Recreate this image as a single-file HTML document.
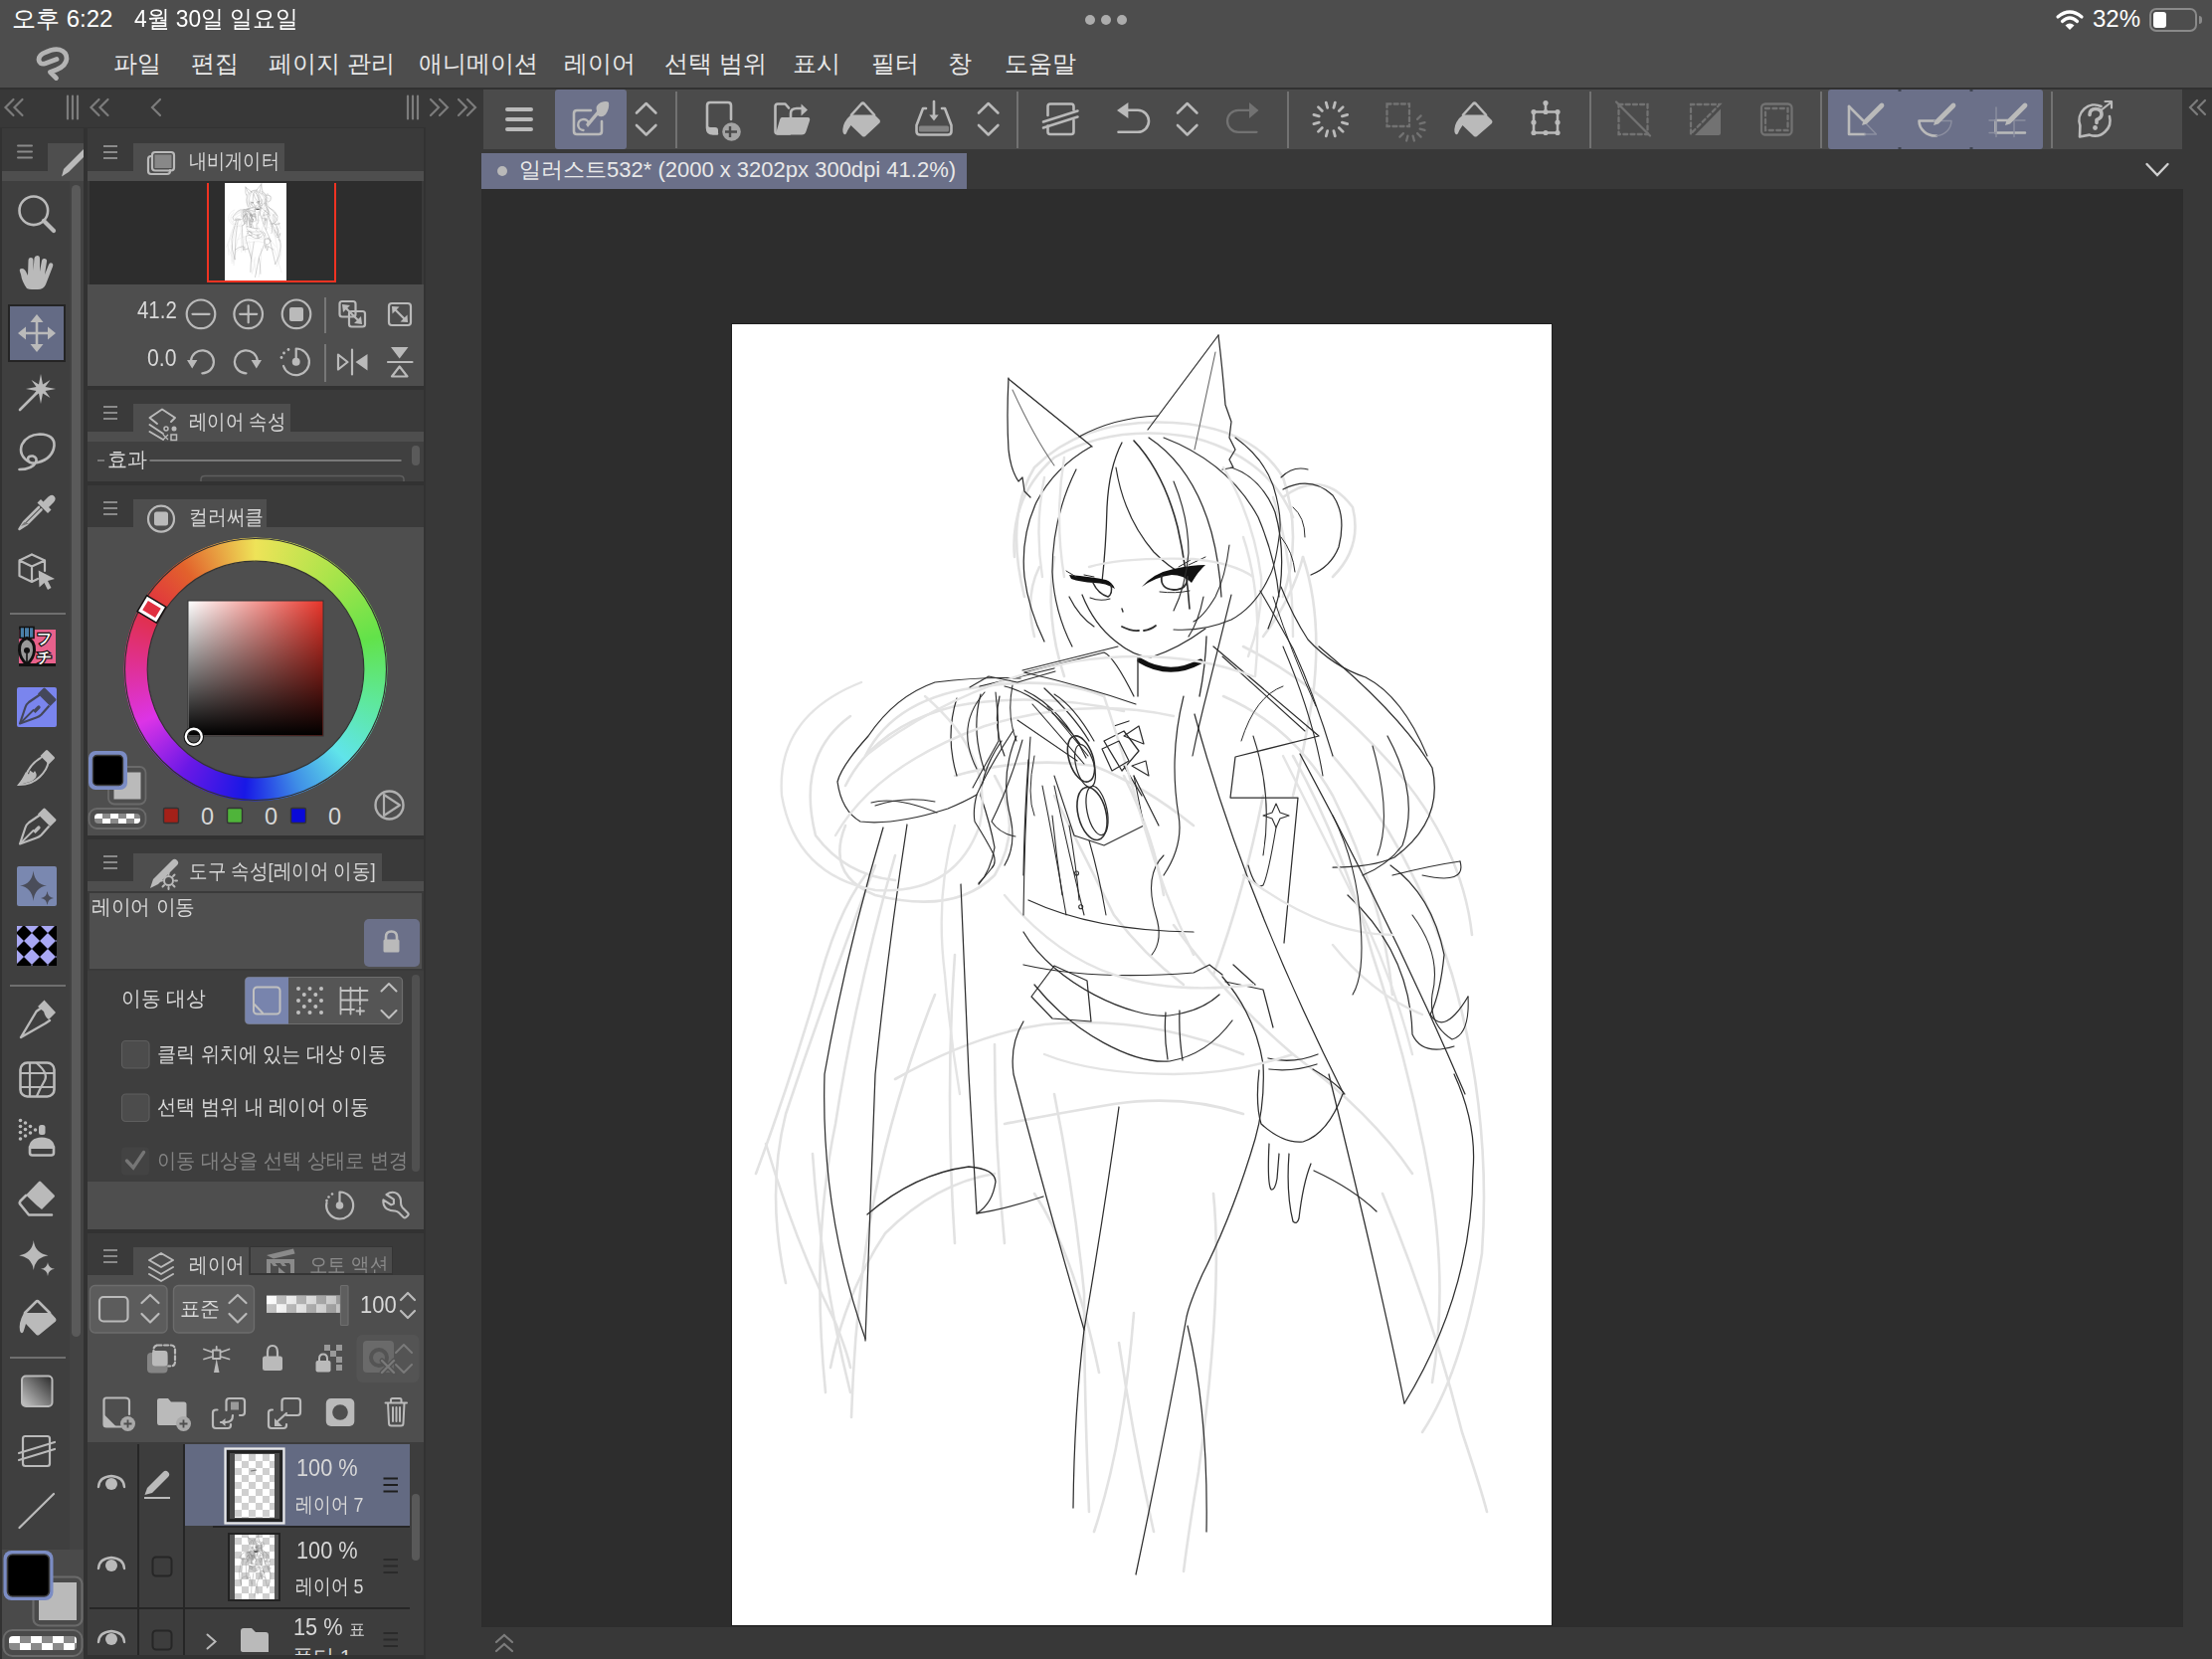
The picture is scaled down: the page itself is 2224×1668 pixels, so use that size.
<!DOCTYPE html>
<html><head><meta charset="utf-8">
<style>
*{margin:0;padding:0;box-sizing:border-box}
html,body{width:2224px;height:1668px;overflow:hidden;background:#383838;font-family:"Liberation Sans",sans-serif;color:#e0e0e0}
.a{position:absolute}
svg{position:absolute;overflow:visible}
.t{position:absolute;white-space:nowrap;line-height:1}
.ic{fill:none;stroke:#b9b9b9;stroke-width:2.6;stroke-linecap:round;stroke-linejoin:round}
.fi{fill:#b9b9b9;stroke:none}
.mn{font-size:24px;color:#e8e8e8;top:52px}
</style></head><body>
<!-- ===== top bar ===== -->
<div class="a" style="left:0;top:0;width:2224px;height:88px;background:#4d4d4d"></div>
<div class="a" style="left:0;top:88px;width:2224px;height:2px;background:#313131"></div>
<div class="t" style="left:12px;top:7px;font-size:24px;color:#fff">오후 6:22</div>
<div class="t" style="left:135px;top:7px;font-size:24px;transform:scaleX(0.95);transform-origin:0 0;color:#fff">4월 30일 일요일</div>
<!-- three dots -->
<div class="a" style="left:1091px;top:15px;width:10px;height:10px;border-radius:50%;background:#acacac"></div>
<div class="a" style="left:1107px;top:15px;width:10px;height:10px;border-radius:50%;background:#acacac"></div>
<div class="a" style="left:1123px;top:15px;width:10px;height:10px;border-radius:50%;background:#acacac"></div>
<!-- wifi / battery -->
<svg style="left:2067px;top:9px" width="28" height="22" viewBox="0 0 28 22">
<path d="M2 8 Q14 -2 26 8" fill="none" stroke="#fff" stroke-width="3.2" stroke-linecap="round"/>
<path d="M6.5 12.5 Q14 5.5 21.5 12.5" fill="none" stroke="#fff" stroke-width="3.2" stroke-linecap="round"/>
<path d="M14 21 L9.5 16.5 Q14 12.5 18.5 16.5 Z" fill="#fff"/>
</svg>
<div class="t" style="left:2104px;top:7px;font-size:24px;color:#fff">32%</div>
<div class="a" style="left:2161px;top:8px;width:48px;height:24px;border:2px solid #8a8a8a;border-radius:7px"></div>
<div class="a" style="left:2165px;top:12px;width:13px;height:16px;background:#fff;border-radius:3px"></div>
<div class="a" style="left:2211px;top:16px;width:3px;height:8px;background:#8a8a8a;border-radius:0 3px 3px 0"></div>
<!-- CSP logo -->
<svg style="left:36px;top:47px" width="36" height="34" viewBox="0 0 36 34">
<path d="M21 12.5 L9 17 Q3.5 18 3 13 Q3 8 10 5.5 L15 3.5 Q20 2 24 3 Q31 5 31 12 Q30.5 19 21 23 L14.5 25.5 L20.5 31.5" fill="none" stroke="#b4b4b4" stroke-width="4.8" stroke-linecap="round" stroke-linejoin="round"/>
</svg>
<!-- menu -->
<div class="t mn" style="left:114px">파일</div>
<div class="t mn" style="left:192px">편집</div>
<div class="t mn" style="left:270px">페이지 관리</div>
<div class="t mn" style="left:421px">애니메이션</div>
<div class="t mn" style="left:567px">레이어</div>
<div class="t mn" style="left:668px">선택 범위</div>
<div class="t mn" style="left:797px">표시</div>
<div class="t mn" style="left:876px">필터</div>
<div class="t mn" style="left:953px">창</div>
<div class="t mn" style="left:1010px">도움말</div>

<!-- ===== header row (left) ===== -->
<div class="a" style="left:0;top:90px;width:486px;height:38px;background:#383838"></div>
<svg style="left:0;top:90px" width="486" height="38" viewBox="0 0 486 38">
<g fill="none" stroke="#7c7c7c" stroke-width="2.2" stroke-linecap="round">
<path d="M13.5 10 L5.5 18 L13.5 26 M22.5 10 L14.5 18 L22.5 26"/>
<path d="M68 6.5 V29.5 M73 6.5 V29.5 M78 6.5 V29.5"/>
<path d="M99.5 10 L91.5 18 L99.5 26 M108.5 10 L100.5 18 L108.5 26"/>
<path d="M161 10 L153 18 L161 26"/>
<path d="M410 6.5 V29.5 M415 6.5 V29.5 M420 6.5 V29.5"/>
<path d="M433 10 L441 18 L433 26 M442 10 L450 18 L442 26"/>
<path d="M461 10 L469 18 L461 26 M470 10 L478 18 L470 26"/>
</g></svg>

<!-- ===== toolbar ===== -->
<div class="a" style="left:486px;top:90px;width:1708px;height:60px;background:#4b4b4b"></div>
<div class="a" style="left:558px;top:90px;width:72px;height:60px;background:#6b7089;border-radius:3px"></div>
<div class="a" style="left:1838px;top:90px;width:216px;height:60px;background:#6b7089;border-radius:3px"></div>
<div class="a" style="left:679px;top:92px;width:2px;height:57px;background:#727272"></div>
<div class="a" style="left:1022px;top:92px;width:2px;height:57px;background:#727272"></div>
<div class="a" style="left:1294px;top:92px;width:2px;height:57px;background:#727272"></div>
<div class="a" style="left:1598px;top:92px;width:2px;height:57px;background:#727272"></div>
<div class="a" style="left:1830px;top:92px;width:2px;height:57px;background:#727272"></div>
<div class="a" style="left:2062px;top:92px;width:2px;height:57px;background:#727272"></div>
<!-- right column chevrons -->
<svg style="left:2194px;top:90px" width="30" height="38" viewBox="0 0 30 38">
<path d="M15 11 L8 18 L15 25 M23 11 L16 18 L23 25" fill="none" stroke="#7c7c7c" stroke-width="2.2" stroke-linecap="round"/>
</svg>
<!-- toolbar icons -->
<svg style="left:0;top:0" width="2224" height="160" viewBox="0 0 2224 160">
<g fill="none" stroke="#bababa" stroke-width="2.6" stroke-linecap="round" stroke-linejoin="round">
<!-- hamburger -->
<path d="M510 110 H534 M510 120 H534 M510 130 H534" stroke-width="4"/>
<!-- active tool -->
<path d="M594 111 H580 Q577 111 577 114 V132 Q577 135 580 135 H602 Q605 135 605 132 V122"/>
<path d="M586.5 131 A5.5 5.5 0 1 1 592 124" stroke-width="2.4"/>
<!-- updown -->
<path d="M640 113.5 L649.7 104 L659.4 113.5 M640 126 L649.7 135.5 L659.4 126"/>
<path d="M984 113.5 L993.7 104 L1003.4 113.5 M984 126 L993.7 135.5 L1003.4 126"/>
<path d="M1184 113.5 L1193.7 104 L1203.4 113.5 M1184 126 L1193.7 135.5 L1203.4 126"/>
<!-- new doc -->
<path d="M721 134.5 H717 Q711 134.5 711 128.5 V106 Q711 103 714 103 H732 Q735 103 735 106 V120"/>
<!-- open folder -->
<path d="M794 134.5 H782 Q779.5 134.5 779.5 132 V107 Q779.5 104.5 782 104.5 H789.5 L793 108.5"/>
<path d="M795 118 V114 Q795 109 801 109 H807"/>
<!-- bucket outline top -->
<path d="M856 115.5 L866 104.5 Q867.5 103 869 104.5 L879 115.5"/>
<!-- save tray -->
<path d="M931 109 H928 L921.5 126 V132 Q921.5 135.5 925 135.5 H953 Q956.5 135.5 956.5 132 V126 L950 109 H947"/>
<path d="M939 102 V118"/>
<!-- clear layer -->
<path d="M1053.5 116 V107 Q1053.5 104.5 1056 104.5 H1077 Q1079.5 104.5 1079.5 107 V110.5 M1079.5 121 V132.5 Q1079.5 135 1077 135 H1056 Q1053.5 135 1053.5 132.5 V126.5"/>
<path d="M1049 122.5 L1083.5 111.5 M1049 128.5 L1083.5 117.5"/>
<!-- undo -->
<path d="M1132 110.8 H1144 A11 11 0 0 1 1144 132.8 H1124.5"/>
<!-- transform box -->
<path d="M1471 115.5 L1481 104.5 Q1482.5 103 1484 104.5 L1494 115.5"/>
<path d="M1542 112.5 H1566 V133.5 H1542 Z M1554 112.5 V103.5"/>
<!-- ruler icons -->
<path d="M1859 107 V135 H1875" />
<path d="M1875 135 H1886.5 L1875 123" stroke="#8c8fa0" stroke-width="1.4"/>
<path d="M1859 107 L1873 121"/>
<path d="M1929.5 121.5 H1945 M1929.5 121.5 A16.5 15 0 0 0 1947 136.5" />
<path d="M1945 121.5 H1962 A16.5 15 0 0 1 1947 136.5" stroke="#8c8fa0" stroke-width="1.4"/>
<path d="M2006.5 121 V133.5 H2036 M2006.5 121 H2019" />
<path d="M2007 108 V137.5 M2025 121 V137.5 M2000 121 H2006 M2019 121 H2036 M2000 133.5 H2006" stroke="#8c8fa0" stroke-width="1.4"/>
<!-- help -->
<path d="M2100.7 135.6 L2091 137.5 L2091.4 126.3 A15.5 15.5 0 0 1 2112.55 106.95 M2120.97 117 A15.5 15.5 0 0 1 2100.7 135.6"/>
<path d="M2113.5 110 L2123 102.5 M2116.5 102 H2123 V108.5" stroke-width="2.2"/>
<path d="M2101 115.5 Q2101 109.5 2107 109.5 Q2113 109.5 2113 115 Q2113 118.5 2108 120.5 V123.5" stroke-width="3.6"/>
</g>
<g fill="#bababa">
<!-- active tool leaf -->
<path d="M589 125 L600 112 Q598 106 604 103 Q610 101 612 103 Q613 109 609 115 Q605 119 601 116 L591 128 Z"/>
<!-- new doc corner + plus circle -->
<path d="M711 124 Q711 128 714.5 128 H719 Q722 128 722 131 V135 H717 Q711 135 711 128.5 Z"/>
<circle cx="735.5" cy="132.5" r="9.3" fill="#a4a4a4"/>
<!-- folder front -->
<path d="M786 118 H812 Q815 118 814 121.5 L810.5 132 Q809.5 135.5 806 135.5 H782 Q779.5 135.5 780.5 132.5 L784 120.5 Q784.5 118 786 118 Z"/>
<path d="M805.5 104.5 L812 110.5 L805.5 116.5 Z"/>
<!-- bucket fill -->
<path d="M855.5 115.5 H879.5 L884.5 120.5 Q885.5 122 884.5 123.5 L870 137 Q868.5 138 867 137 L855.5 126 Q852 131 851 134 Q849 137 847.5 133 Q846.5 126 852 119 Z"/>
<!-- save tray bar -->
<rect x="924" y="126.5" width="30" height="6" rx="1.5" fill="#838383"/>
<path d="M934.3 115.5 H943.7 L939 121.5 Z"/>
<!-- undo arrowhead -->
<path d="M1134.4 102.9 V119 L1123 111 Z"/>
<!-- bucket 2 -->
<path d="M1471 115.5 H1494.5 L1500 121 Q1501 122.5 1500 124 L1485 137 Q1483.5 138 1482 137 L1470.5 126 Q1467 131 1466 134 Q1464 137 1462.5 133 Q1461.5 126 1467 119 Z"/>
<!-- transform handles -->
<circle cx="1542" cy="112.5" r="2.6"/><circle cx="1554" cy="112.5" r="2.6"/><circle cx="1566" cy="112.5" r="2.6"/>
<circle cx="1542" cy="123" r="2.6"/><circle cx="1566" cy="123" r="2.6"/>
<circle cx="1542" cy="133.5" r="2.6"/><circle cx="1554" cy="133.5" r="2.6"/><circle cx="1566" cy="133.5" r="2.6"/>
<circle cx="1554" cy="103.5" r="2.6"/>
<!-- pencils -->
<path d="M1873.5 121 L1877 117.5 L1890 104.5 Q1892 102.5 1894 104.5 Q1895 106.5 1893.5 108 L1880.5 121 L1877 124.5 Z M1873.5 121 L1872 126 L1877 124.5 Z"/>
<path d="M1945.5 121 L1949 117.5 L1962 104.5 Q1964 102.5 1966 104.5 Q1967 106.5 1965.5 108 L1952.5 121 L1949 124.5 Z M1945.5 121 L1944 126 L1949 124.5 Z"/>
<path d="M2017.5 121 L2021 117.5 L2034 104.5 Q2036 102.5 2038 104.5 Q2039 106.5 2037.5 108 L2024.5 121 L2021 124.5 Z M2017.5 121 L2016 126 L2021 124.5 Z"/>
<circle cx="2106.5" cy="128.5" r="2.4"/>
</g>
<g fill="#484848"><path d="M734 127 V138 M729 132.5 H741" stroke="#4b4b4b" stroke-width="2.4"/></g>
<!-- dim icons -->
<g fill="none" stroke="#727272" stroke-width="2.3" stroke-linecap="round">
<path d="M1257 110.8 H1245 A11 11 0 0 0 1245 132.8 H1263.5"/>
<path d="M1394.5 104.5 H1417 V127 H1394.5 Z" stroke-dasharray="4 3.2"/>
<path d="M1627.5 105 H1656.5 V135 H1627.5 Z" stroke-dasharray="4 3.2"/>
<path d="M1625 102.5 L1659 136.5"/>
<path d="M1700 134.5 V105 H1729 L1700 134.5" stroke-dasharray="4 3.2"/>
<rect x="1771" y="104.5" width="30.5" height="31" rx="4"/>
<path d="M1775 109 H1797.5 V131 H1775 Z" stroke-dasharray="4 3.4"/>
</g>
<g fill="#727272">
<path d="M1265.5 111 L1256 103 V119 Z"/>
<path d="M1730 109.5 V134 Q1730 136 1728 136 H1704 Z"/>
</g>

<g stroke="#bababa" stroke-width="2.8" stroke-linecap="round">
<path d="M1337.8 102.5 V108" transform="rotate(15 1337.8 120)"/>
<path d="M1337.8 102.5 V108" transform="rotate(45 1337.8 120)"/>
<path d="M1337.8 102.5 V108" transform="rotate(75 1337.8 120)"/>
<path d="M1337.8 102.5 V108" transform="rotate(105 1337.8 120)"/>
<path d="M1337.8 102.5 V108" transform="rotate(135 1337.8 120)"/>
<path d="M1337.8 102.5 V108" transform="rotate(165 1337.8 120)"/>
<path d="M1337.8 102.5 V108" transform="rotate(195 1337.8 120)"/>
<path d="M1337.8 102.5 V108" transform="rotate(225 1337.8 120)"/>
<path d="M1337.8 102.5 V108" transform="rotate(255 1337.8 120)"/>
<path d="M1337.8 102.5 V108" transform="rotate(285 1337.8 120)"/>
<path d="M1337.8 102.5 V108" transform="rotate(315 1337.8 120)"/>
<path d="M1337.8 102.5 V108" transform="rotate(345 1337.8 120)"/>
</g>
<g stroke="#727272" stroke-width="2.3" stroke-linecap="round">
<path d="M1418 112 V117" transform="rotate(45 1418 127)"/>
<path d="M1418 112 V117" transform="rotate(75 1418 127)"/>
<path d="M1418 112 V117" transform="rotate(105 1418 127)"/>
<path d="M1418 112 V117" transform="rotate(135 1418 127)"/>
<path d="M1418 112 V117" transform="rotate(165 1418 127)"/>
<path d="M1418 112 V117" transform="rotate(195 1418 127)"/>
<path d="M1418 112 V117" transform="rotate(225 1418 127)"/>
</g>
<g fill="#404552">
<rect x="1908.5" y="90" width="3" height="2"/><rect x="1980.5" y="90" width="3" height="2"/>
<rect x="1908.5" y="148" width="3" height="2"/><rect x="1980.5" y="148" width="3" height="2"/>
</g>
</svg>


<!-- ===== doc tab ===== -->
<div class="a" style="left:484px;top:154px;width:488px;height:36px;background:#6b7089"></div>
<div class="a" style="left:500px;top:167px;width:10px;height:10px;border-radius:50%;background:#b9b9b9"></div>
<div class="t" style="left:522px;top:160px;font-size:22px;color:#e8e8e8">일러스트532* (2000 x 3202px 300dpi 41.2%)</div>
<svg style="left:2157px;top:163px" width="24" height="16" viewBox="0 0 24 16">
<path d="M1.5 2 L12 13 L22.5 2" fill="none" stroke="#d0d0d0" stroke-width="2.4" stroke-linecap="round"/>
</svg>

<!-- ===== canvas ===== -->
<div class="a" style="left:484px;top:190px;width:1711px;height:1446px;background:#2d2d2d"></div>
<div class="a" style="left:735px;top:325px;width:826px;height:1310px;background:#1f1f1f"></div>
<div class="a" style="left:736px;top:326px;width:824px;height:1308px;background:#fff"></div>
<svg style="left:736px;top:326px" width="824" height="1308" viewBox="736 326 824 1308">
<!-- light sketch layer -->
<g fill="none" stroke="#e2e2e2" stroke-width="2.6" stroke-linecap="round">
<path d="M1030 600 Q1010 520 1040 470 Q1090 420 1180 425 Q1260 430 1290 480 Q1310 540 1290 600"/>
<path d="M1020 560 Q1015 500 1060 460 Q1120 425 1200 440 Q1275 460 1300 520"/>
<path d="M1040 640 Q1030 600 1045 570 M1270 640 Q1300 600 1310 560"/>
<path d="M1290 500 Q1330 470 1360 510 Q1370 550 1340 580"/>
<path d="M870 760 Q900 700 990 690 Q1060 680 1110 700 M850 790 Q880 730 960 710 Q1040 695 1130 715"/>
<path d="M850 830 Q830 880 880 900 Q960 920 1000 880 Q1030 830 1000 780"/>
<path d="M855 720 Q800 760 820 840 Q850 880 900 885"/>
<path d="M880 870 Q830 1000 790 1120 Q770 1200 790 1290"/>
<path d="M900 860 Q860 1000 840 1130 Q815 1250 830 1400"/>
<path d="M760 1180 Q790 1100 820 1000 Q840 920 870 880"/>
<path d="M770 1150 Q800 1250 840 1330 Q852 1360 855 1375"/>
<path d="M817 1160 Q825 1280 855 1400"/>
<path d="M940 1000 Q900 1100 880 1200 Q860 1300 856 1425"/>
<path d="M960 960 Q950 1100 960 1250"/>
<path d="M1000 1050 Q1000 1150 1010 1250"/>
<path d="M1060 1100 Q1080 1200 1090 1300 Q1090 1400 1095 1520"/>
<path d="M1040 1200 Q1080 1260 1105 1380"/>
<path d="M1125 1350 Q1140 1450 1160 1540 M1140 1320 Q1130 1450 1100 1540"/>
<path d="M1220 1200 Q1230 1300 1205 1480 Q1195 1540 1190 1580"/>

<path d="M1180 930 Q1230 1000 1300 1060 Q1380 1120 1420 1180"/>
<path d="M1300 760 Q1350 850 1380 960 Q1420 1080 1440 1200 Q1455 1300 1440 1390"/>
<path d="M1340 760 Q1420 850 1460 980 Q1500 1120 1490 1260 Q1470 1380 1430 1440"/>
<path d="M1230 700 Q1300 730 1340 800 Q1390 900 1400 1000"/>
<path d="M1250 650 Q1330 690 1400 770 Q1470 850 1480 940"/>

<path d="M1390 1200 Q1440 1320 1470 1440 Q1490 1500 1495 1520"/>
<path d="M1010 1130 Q1060 1120 1120 1110 Q1190 1100 1250 1120"/>
<path d="M900 1085 Q980 1040 1050 1030 Q1150 1020 1250 1060"/>
<path d="M960 780 Q1030 760 1100 770 Q1150 790 1200 830"/>
<path d="M1060 800 Q1090 860 1120 920 Q1150 960 1190 990"/>
<path d="M1130 780 Q1160 840 1170 900"/>
<path d="M1270 800 Q1250 900 1220 980"/>
<path d="M1310 560 Q1330 620 1320 700 Q1310 760 1300 800"/>
<path d="M1060 560 Q1050 620 1070 680"/>

<path d="M835 1375 Q850 1300 890 1240 Q940 1190 1000 1180"/>
</g>
<!-- main line art -->
<g fill="none" stroke="#2e2e2e" stroke-width="1.25" stroke-linecap="round" stroke-linejoin="round">
<!-- ears -->
<path d="M1014 380 Q1012 420 1014 452 Q1016 472 1024 484 L1028 480 L1030 494 L1036 500"/>
<path d="M1014 381 L1098 449"/>
<path d="M1225 337 L1154 432"/>
<path d="M1225 337 Q1229 370 1232 407 L1238 424 L1236 440 L1242 452 L1236 462 L1240 470 L1229 472"/>
<path d="M1222 354 Q1212 400 1201 452" stroke="#666" stroke-width="1.1"/>
<path d="M1018 392 Q1040 440 1060 468" stroke="#777" stroke-width="1.1"/>
<!-- head top & hair -->
<path d="M1085 439 Q1120 420 1164 418"/>
<path d="M1097 449 Q1060 470 1042 505 Q1026 540 1030 580 Q1034 612 1050 645"/>
<path d="M1082 472 Q1058 520 1058 575 Q1060 615 1078 650" stroke-width="1.2"/>
<path d="M1128 445 Q1115 470 1113 510 Q1112 550 1108 585" stroke-width="1.3"/>
<path d="M1140 443 Q1170 475 1184 530 Q1193 570 1196 612" stroke-width="1.6"/>
<path d="M1122 470 Q1130 520 1160 555 Q1175 570 1190 578" stroke-width="1.2"/>
<path d="M1155 440 Q1200 470 1218 535 Q1226 565 1228 600"/>
<path d="M1170 440 Q1235 465 1265 520 Q1282 560 1286 600" stroke-width="1.2"/>
<path d="M1238 470 Q1268 480 1282 515 Q1292 550 1287 592 Q1283 612 1275 632"/>
<path d="M1075 600 Q1085 620 1100 630 M1210 600 Q1205 625 1195 640" stroke-width="1.2"/>
<!-- bun -->
<path d="M1290 492 Q1318 478 1340 498 Q1354 518 1346 550 Q1338 570 1318 578"/>
<path d="M1288 480 Q1300 468 1315 472" stroke-width="1.1"/>
<!-- face -->
<path d="M1088 598 Q1100 628 1122 645 Q1140 660 1157 661 Q1185 652 1212 632"/>
<path d="M1075 578 Q1098 580 1112 583 Q1118 585 1121 592 Q1112 586 1100 586 Q1086 585 1077 582 Z" fill="#111" stroke="none"/><path d="M1072 574 L1082 580 M1090 578 L1100 580" stroke-width="1"/>
<path d="M1099 586 Q1104 597 1114 600 Q1119 597 1117 588" stroke-width="1.5"/><path d="M1096 601 Q1106 605 1116 602" stroke-width="1.1"/>
<path d="M1148 590 Q1160 576 1180 572 Q1198 568 1212 568 Q1205 574 1198 586 Q1190 578 1178 578 Q1162 580 1148 590 Z" fill="#111" stroke="none"/><path d="M1195 568 L1212 560 M1185 570 L1197 563" stroke-width="1"/>
<path d="M1168 579 Q1166 592 1180 593 Q1194 593 1194 580" stroke-width="1.8"/><path d="M1166 595 Q1182 597 1196 594" stroke-width="1"/>
<path d="M1128 630 Q1138 635 1145 634 M1150 634 Q1157 633 1162 629" stroke-width="1.8"/>
<path d="M1128 612 L1129 615" stroke-width="1.4"/>
<path d="M1146 664 Q1176 682 1207 665" stroke="#111" stroke-width="5"/>
<path d="M1144 660 V700 M1213 640 Q1212 670 1206 700" stroke-width="1.3"/>
<!-- collar / shoulders -->
<path d="M1030 676 L1110 656 M985 690 L1060 672 M1110 656 Q1120 660 1140 700"/>
<path d="M1026 682 Q990 680 940 686 Q900 700 873 740 Q846 770 842 786 Q846 815 865 826 Q900 830 953 813 Q970 806 982 799"/>
<path d="M880 810 Q910 800 940 806" stroke-width="1.1"/>
<path d="M962 702 Q950 740 962 780 M986 698 Q976 735 990 775 M1005 700 Q998 730 1010 760" stroke-width="1.2"/>
<path d="M1010 690 Q1050 700 1086 748 M1030 694 Q1068 712 1092 762 M1050 692 Q1080 720 1095 745" stroke-width="1.2"/>
<ellipse cx="1091" cy="770" rx="9" ry="22" transform="rotate(-15 1091 770)"/>
<ellipse cx="1103" cy="815" rx="10" ry="25" transform="rotate(-12 1103 815)"/>
<path d="M1110 745 L1130 735 L1145 755 L1128 775 Z M1120 730 L1135 725 M1130 770 L1148 800" stroke-width="1.3"/>
<path d="M1060 780 L1080 840 L1110 850 L1150 830 L1140 780" stroke-width="1.1"/>
<!-- hair strands left of body -->
<path d="M1007 745 Q988 772 986 800 Q996 830 1000 852 Q996 876 984 889"/>
<path d="M1022 740 Q1005 780 1016 822 Q1022 850 1010 870" stroke-width="1.2"/>
<path d="M1034 764 Q1030 820 1029 880"/>
<path d="M1058 820 Q1062 860 1068 900 M1075 830 Q1082 870 1085 905" stroke-width="1.1"/>
<!-- cape left -->
<path d="M888 832 Q850 960 829 1080 Q825 1220 870 1346"/>
<path d="M912 829 Q892 960 880 1080 L870 1348"/>
<path d="M966 889 L974 1080 L982 1220"/>
<path d="M872 1221 Q920 1180 974 1173 Q1000 1175 1001 1188 Q998 1210 982 1220 Q1010 1216 1049 1203" stroke-width="1.3"/>
<!-- belts -->
<path d="M1034 905 Q1100 936 1200 937"/>
<path d="M1029 970 Q1100 986 1200 978 L1216 970 L1229 980"/>
<path d="M1029 937 C1060 990 1140 1025 1176 1021 C1200 1018 1215 1010 1226 1000"/>
<path d="M1040 990 C1080 1040 1140 1070 1176 1067 C1205 1062 1225 1045 1239 1026"/>
<path d="M1037 1002 L1060 971 L1093 986 L1097 1027 L1058 1024 Z"/>
<path d="M1172 1018 Q1170 1040 1174 1065 M1186 1016 Q1185 1040 1189 1066"/>
<!-- legs -->
<path d="M1029 1027 Q1015 1050 1019 1080 Q1050 1200 1090 1337 Q1080 1420 1079 1516"/>
<path d="M1125 1113 Q1110 1220 1090 1337"/>
<path d="M1229 982 Q1262 1020 1270 1070 Q1272 1110 1262 1145 Q1240 1220 1209 1281 Q1196 1310 1193 1324 Q1170 1450 1142 1583"/>
<path d="M1194 1333 Q1215 1420 1213 1540"/>

<!-- coat right -->
<path d="M1220 650 L1326 740 L1242 761 L1237 802 L1305 802 L1291 948"/>
<path d="M1229 660 L1312 735" stroke-width="1.1"/>
<path d="M1201 718 Q1250 900 1351 1100"/>
<path d="M1307 758 Q1400 930 1473 1100"/>
<path d="M1336 1080 Q1390 1300 1412 1411"/>
<path d="M1462 1080 Q1485 1130 1481 1177 Q1480 1300 1412 1411"/>
<path d="M1321 1177 Q1360 1195 1384 1218"/>
<path d="M1283 808 L1287 817 L1296 820 L1287 823 L1283 832 L1279 823 L1270 820 L1279 817 Z" stroke-width="1.1"/>
<path d="M1283 832 Q1275 880 1270 890 Q1262 895 1255 870" stroke-width="1.1"/>
<!-- hand right -->
<path d="M1275 1064 Q1300 1070 1325 1060 M1276 1075 Q1300 1078 1324 1070 M1266 1076 Q1262 1110 1268 1130 Q1290 1150 1310 1148 Q1335 1140 1350 1100 M1320 1075 Q1345 1090 1352 1100 M1276 1150 Q1274 1190 1278 1196 Q1282 1197 1284 1185 L1286 1160 M1296 1160 Q1293 1200 1300 1228 Q1304 1232 1306 1225 Q1310 1190 1318 1170 M1232 987 L1270 995 L1280 1033 M1240 970 L1262 990"/>

<!-- hair right -->
<path d="M1326 650 Q1410 720 1440 772 Q1452 825 1402 862 Q1380 872 1340 872"/>
<path d="M1395 740 Q1428 800 1410 850 Q1395 870 1370 880" stroke-width="1.2"/>
<path d="M1380 750 Q1400 820 1385 860" stroke-width="1.1"/>
<path d="M1398 870 Q1440 900 1452 960 Q1448 1000 1438 1020 Q1452 1042 1476 1002"/>
<path d="M1355 900 Q1418 958 1420 1040 Q1430 1062 1462 1052" stroke-width="1.2"/>
<path d="M1400 880 Q1440 870 1468 866" stroke-width="1.2"/>
<path d="M1290 650 Q1320 720 1330 780" stroke-width="1.1"/>
<path d="M1190 700 Q1175 760 1185 820 Q1190 850 1170 880" stroke-width="1.2"/>
<path d="M1170 860 Q1150 880 1162 920 Q1170 945 1158 960" stroke-width="1.1"/>
<path d="M1260 740 Q1280 800 1270 860" stroke-width="1.1"/>
</g>
<g fill="none" stroke="#e4e4e4" stroke-width="2.4" stroke-linecap="round">
<path d="M866 686 Q780 720 786 800 Q800 880 880 895 Q960 900 985 830 Q1000 760 930 700"/>
<path d="M870 760 Q960 690 1080 665 Q1180 650 1260 680"/>
<path d="M840 840 Q880 770 990 730 Q1090 700 1180 720"/>
<path d="M1110 700 Q1130 760 1150 830 Q1170 900 1200 960"/>
<path d="M1280 500 Q1300 560 1300 640 M1250 540 Q1270 600 1262 680"/>
<path d="M1290 760 Q1320 820 1360 900 Q1400 980 1420 1060"/>

<path d="M1340 950 Q1380 1000 1430 1020 M1250 880 Q1330 940 1400 940"/>
<path d="M1010 900 Q1060 960 1120 980 Q1180 1000 1260 990"/>
<path d="M1050 1060 Q1100 1080 1180 1080 Q1240 1080 1300 1060"/>
<path d="M960 830 Q940 900 950 980 Q955 1040 965 1100"/>
<path d="M1050 480 Q1040 530 1048 580 M1070 460 Q1060 520 1070 580"/>
<path d="M1230 470 Q1260 520 1268 580 Q1270 620 1255 660"/>
<path d="M1095 570 Q1130 560 1200 562 Q1240 566 1260 580"/>
</g>
<g fill="none" stroke="#2e2e2e" stroke-width="1.15" stroke-linecap="round" stroke-linejoin="round">
<path d="M1242 440 Q1270 460 1280 488 Q1290 520 1286 540 Q1282 570 1276 580 Q1262 610 1238 623 Q1210 635 1180 633"/>
<path d="M1288 590 Q1300 620 1315 643 Q1340 670 1373 681 Q1410 700 1435 760"/>
<path d="M1267 594 Q1285 625 1300 652 Q1322 700 1340 760"/>
<path d="M1280 600 Q1300 660 1323 710" stroke-width="1"/>
<path d="M1238 598 Q1225 650 1215 691 Q1205 730 1199 760"/>
<path d="M1180 484 Q1195 520 1195 556 Q1192 590 1180 614"/>
<path d="M1236 548 Q1232 580 1222 600 Q1210 620 1200 625" stroke-width="1.1"/>
<path d="M1288 540 Q1300 555 1302 575 M1300 510 Q1312 520 1312 540" stroke-width="1"/>
<!-- sleeve top / collar -->
<path d="M975 691 L994 680 L1023 686 L1061 675"/>
<path d="M1028 674 L1124 650 M1030 676 Q1090 690 1142 708"/>
<path d="M876 807 Q900 800 942 817" stroke-width="1.1"/>
<path d="M990 696 Q960 730 982 773 M1001 696 Q1004 720 1004 745 Q990 770 978 792 M1018 689 Q1012 720 1022 745" stroke-width="1.1"/>
<path d="M1038 708 L1090 768 M1053 710 L1094 760 M1023 724 L1083 765 M1060 698 Q1080 710 1100 745" stroke-width="1.1"/>
<ellipse cx="1087" cy="763" rx="12" ry="24" transform="rotate(-18 1087 763)" stroke-width="1.6"/>
<ellipse cx="1098" cy="818" rx="14" ry="27" transform="rotate(-14 1098 818)" stroke-width="1.6"/>
<path d="M1108 753 L1125 745 L1135 765 L1118 775 Z M1130 740 L1145 730 L1150 748 Z M1138 770 L1152 765 L1155 780 Z M1140 780 Q1155 810 1165 830" stroke-width="1.2"/>
<path d="M1036 741 Q1030 830 1029 920 M1048 790 Q1060 850 1072 920 M1060 790 Q1075 860 1090 920 M1095 845 Q1105 880 1112 920" stroke-width="1.1"/>
<circle cx="1082.5" cy="878" r="2" stroke-width="1.1"/><circle cx="1086.7" cy="911.8" r="2" stroke-width="1.1"/>
<path d="M1019 734 Q995 770 982 799 Q978 815 980 826 Q992 845 999 859 Q1002 868 997 873 Q990 882 984 888"/>
<path d="M1028 744 Q1015 790 997 826 Q1005 838 1021 841" stroke-width="1.1"/>
<path d="M1040 760 Q1032 800 1040 820" stroke-width="1"/>
<!-- right hair lower waves -->
<path d="M1340 820 Q1365 870 1368 930 Q1372 980 1360 1000" stroke-width="1.1"/>
<path d="M1430 880 Q1475 890 1468 866 M1420 920 Q1450 960 1440 1000 Q1436 1030 1460 1045 Q1478 1040 1476 1002" stroke-width="1.1"/>
<path d="M1248 745 Q1262 700 1290 690" stroke-width="1"/>
</g>
</svg>

<svg style="left:498px;top:1643px" width="18" height="20" viewBox="0 0 18 20">
<path d="M1 8 L9 1 L17 8 M1 17 L9 10 L17 17" fill="none" stroke="#7c7c7c" stroke-width="2.2" stroke-linecap="round"/>
</svg>

<!-- ===== tool column ===== -->
<div class="a" style="left:0;top:128px;width:88px;height:1540px;background:#323232"></div>
<div class="a" style="left:2px;top:129px;width:82px;height:43px;background:#3a3a3a"></div>
<div class="a" style="left:48px;top:144px;width:36px;height:28px;background:#4e4e4e"></div>
<div class="a" style="left:2px;top:172px;width:82px;height:10px;background:#4e4e4e"></div>
<div class="a" style="left:2px;top:182px;width:82px;height:1376px;background:#3f3f3f"></div>
<div class="a" style="left:2px;top:1558px;width:82px;height:110px;background:#4a4a4a"></div>
<div class="a" style="left:70px;top:182px;width:14px;height:1376px;background:#434343"></div><div class="a" style="left:72px;top:186px;width:8.5px;height:1158px;background:#5a5a5a;border-radius:5px"></div>
<!-- move tool bg -->
<div class="a" style="left:8px;top:306px;width:58px;height:58px;background:#242424"></div>
<div class="a" style="left:10px;top:308px;width:54px;height:54px;background:#646b85"></div>
<div class="a" style="left:17px;top:691px;width:40px;height:40px;background:#7a85ee;border-radius:2px"></div>
<div class="a" style="left:17px;top:871px;width:40px;height:40px;background:#7a88b0;border-radius:2px"></div>
<div class="a" style="left:10px;top:616px;width:56px;height:2px;background:#6f6f6f"></div>
<div class="a" style="left:10px;top:990px;width:56px;height:2px;background:#6f6f6f"></div>
<div class="a" style="left:10px;top:1364px;width:56px;height:2px;background:#6f6f6f"></div>
<svg style="left:0;top:0" width="90" height="1668" viewBox="0 0 90 1668">
<g fill="none" stroke="#bababa" stroke-width="2.6" stroke-linecap="round" stroke-linejoin="round">
<!-- hamburger -->
<path d="M18 146.5 H32 M18 152.5 H32 M18 158.5 H32" stroke="#8a8a8a" stroke-width="2"/>
<!-- search -->
<circle cx="33.8" cy="211.8" r="14.3"/>
<path d="M44 222 L54 232" stroke-width="4.2"/>
<!-- move arrows -->
<path d="M37 320 V350 M22 335 H52"/>
<!-- wand -->
<path d="M20 412 L37 395"/>
<!-- lasso -->
<path d="M30 465 Q18 458 22 447 Q27 437 40 436.5 Q55 437 54.5 448 Q53 461 38 465 Q29 467 28 462 Q28 458 33 458.5 Q38 460 36 465 Q32 472 19.5 472"/>
<!-- eyedropper -->
<path d="M39 510 L24 525 L19.5 532 L26.5 527.5 L41.5 512.5"/>
<!-- cube -->
<path d="M32 557.5 L45 563.5 V574 M32 557.5 L19.5 563.5 V579 L32 585 L38 582 M19.5 563.5 L32 569.5 L45 563.5 M32 569.5 V585" stroke-width="2.2"/>

<!-- pen nib heart -->
<path d="M48.5 1016 Q44 1010 36.5 1017 L21 1043 L45.5 1029 L50 1026" stroke-width="2.4"/>
<!-- mesh -->
<rect x="20.5" y="1068.5" width="34" height="34" rx="7"/>
<path d="M30 1069 V1102 M21 1079 H54 M21 1093 H54 M37 1069 Q50 1080 44 1088 Q40 1095 37 1102" stroke-width="2.2"/>
<!-- airbrush bottle -->
<path d="M30 1153 H54 V1159 Q54 1161.5 51.5 1161.5 H32.5 Q30 1161.5 30 1159 Z"/>
<!-- eraser -->
<path d="M26 1202 L20.5 1207.5 Q19 1209.5 20.5 1211 L29 1221.5 H52"/>
<!-- bucket top -->
<path d="M25 1320 L36 1309 Q37.5 1307.5 39 1309 L50 1320"/>
<!-- gradient frame -->
<!-- ruler -->
<rect x="23" y="1444" width="27" height="30" rx="2.5" stroke-width="2.2"/>
<path d="M19 1461 L55 1450 M19 1468 L55 1457" stroke-width="2.2"/>
<!-- line -->
<path d="M19.5 1536 L54 1502" stroke-width="2.2"/>
</g>
<g fill="#bababa">
<!-- tab pencil -->
<path d="M62 177.5 L64 170 L84 150 V158 L69 173 Z M65 168 L68 171"/>
<!-- hand -->
<path d="M27 290 Q22 283 21 276 L20 273 Q19 270 22 270 Q25 270 27 275 L28 277 L28.5 262 Q28.5 259 31 259 Q33.5 259 33.5 262 V272 L34.5 259.5 Q35 257 37.5 257 Q40 257 40 260 V273 L42 262 Q42.5 259.5 45 260 Q47.5 260.5 47 263 L45 276 L49 266 Q50 263.5 52 264.5 Q54 265.5 53 268 L46 286 Q44 291 38 291 H32 Q29 291 27 290 Z"/>
<!-- move heads -->
<path d="M37 316 L30.5 324 H43.5 Z M37 354 L30.5 346 H43.5 Z M18 335 L26 328.5 V341.5 Z M56 335 L48 328.5 V341.5 Z"/>
<!-- wand star -->
<path d="M41 376 L43 386.5 L50.5 382 L45.5 389 L56 391 L45.5 393 L50.5 400 L43 395.5 L41 406 L39 395.5 L31.5 400 L36.5 393 L26 391 L36.5 389 L31.5 382 L39 386.5 Z"/>
<!-- eyedropper top -->
<path d="M37.5 505.5 L41 502 L43.5 504.5 L48.5 499.5 Q52 496.5 54.5 499 Q57 501.5 54 505 L49 510 L51.5 512.5 L48 516 Z"/>
<path d="M21 529 L24.5 525 L29 526.5 Z" fill="#7a7a7a"/>
<!-- cursor -->
<path d="M38.7 573.5 L55 582 L48 584 L51.5 591 L48 593 L44.5 586 L39.5 590.5 Z"/>


<!-- nib heart top -->
<path d="M38 1012 L44.5 1005.5 L56 1018 L49 1025 Q45.5 1023 44 1017 Z"/>
<!-- airbrush dots -->
<circle cx="20.5" cy="1126.5" r="1.8"/><circle cx="25.5" cy="1129" r="1.8"/><circle cx="20.5" cy="1132.5" r="1.8"/><circle cx="25.5" cy="1135.5" r="1.8"/><circle cx="30.5" cy="1132.5" r="1.8"/><circle cx="35.5" cy="1136" r="1.8"/><circle cx="20.5" cy="1138.5" r="1.8"/><circle cx="30.5" cy="1139" r="1.8"/><circle cx="25.5" cy="1142" r="1.8"/><circle cx="20.5" cy="1145" r="1.8"/>
<rect x="39" y="1131" width="6.5" height="10" rx="2.5"/>
<path d="M29 1155 Q29 1144 42 1143.5 Q55 1144 55 1155 Z"/>
<!-- eraser fill -->
<path d="M26 1201.5 L39 1188 Q40 1187 41 1188 L54.5 1201.5 Q55.5 1202.5 54.5 1203.5 L42 1216 L37 1212 Z"/>
<!-- sparkle -->
<path d="M33.8 1247 Q35 1260 48.5 1262.2 Q35 1264.5 33.8 1277 Q32.5 1264.5 19.2 1262.2 Q32.5 1260 33.8 1247 Z"/>
<path d="M48 1269 Q48.6 1275 55 1275.8 Q48.6 1276.6 48 1283 Q47.4 1276.6 41 1275.8 Q47.4 1275 48 1269 Z"/>
<!-- bucket fill -->
<path d="M24 1320 H51 L56 1325.5 Q57 1327 56 1328.5 L39.5 1342 Q38 1343 36.5 1342 L26 1331 Q24.5 1336 23.5 1339 Q21.5 1342 20 1338 Q18.5 1330 24 1320 Z"/>
</g>
<defs><linearGradient id="gr1" x1="1" y1="0" x2="0" y2="1"><stop offset="0" stop-color="#2a2a2a"/><stop offset="1" stop-color="#c8c8c8"/></linearGradient></defs>
<rect x="22" y="1383.5" width="30.5" height="30.5" rx="4" fill="url(#gr1)" stroke="#bababa" stroke-width="2"/>
<g transform="translate(0,0)"><path d="M40 698.5 L29 706 Q26.5 708 25.5 711 L20 727.5 L36.5 721.5 Q39.5 720.5 41.5 718.5 L49.5 709.5" fill="none" stroke="#44475a" stroke-width="2.2" stroke-linejoin="round"/><path d="M20.5 727 L34 713.5" stroke="#44475a" stroke-width="1.8"/><path d="M33 714.5 L37.5 710 Q39 708.7 40.2 710 Q41.4 711.2 40 712.6 L35.5 717 Z" fill="#44475a"/><path d="M38 697.5 L43.5 692 Q44.5 691 45.5 692 L56 702.5 Q57 703.5 56 704.5 L50.5 710 Z" fill="#44475a"/></g>
<g transform="translate(0,121)"><path d="M40 698.5 L29 706 Q26.5 708 25.5 711 L20 727.5 L36.5 721.5 Q39.5 720.5 41.5 718.5 L49.5 709.5" fill="none" stroke="#bababa" stroke-width="2.2" stroke-linejoin="round"/><path d="M20.5 727 L34 713.5" stroke="#bababa" stroke-width="1.8"/><path d="M33 714.5 L37.5 710 Q39 708.7 40.2 710 Q41.4 711.2 40 712.6 L35.5 717 Z" fill="#bababa"/><path d="M38 697.5 L43.5 692 Q44.5 691 45.5 692 L56 702.5 Q57 703.5 56 704.5 L50.5 710 Z" fill="#bababa"/></g>
<path d="M42.5 761 Q30 768 26 780 L19 789 Q32 789 40 781 Q48 773 48.5 766" fill="none" stroke="#bababa" stroke-width="2"/><path d="M19 789 L26 776 L29 778.5 L30 774.5 L33.5 777 L35 775 Q40 782 30 786 Z" fill="#bababa"/><path d="M40.5 760 L46 754.5 Q47 753.5 48 754.5 L54.5 761 Q55.5 762 54.5 763 L49 768.5 Z" fill="#bababa"/>
<!-- pink fuchi icon -->
<rect x="19" y="633" width="37" height="36" fill="#e8618c"/>
<rect x="19" y="667" width="37" height="3" fill="#111"/>
<rect x="20" y="630.5" width="14" height="11" fill="#4a7fa8" stroke="#111" stroke-width="1.6"/>
<path d="M24.5 630.5 V641.5 M29.5 630.5 V641.5" stroke="#111" stroke-width="1"/>
<path d="M27 641.5 Q19 644 19.5 654 Q20 662 27 668 Q34 662 34.5 654 Q35 644 27 641.5 Z" fill="#999" stroke="#111" stroke-width="3"/>
<circle cx="27" cy="654" r="3" fill="#111"/><path d="M27 657 V667" stroke="#111" stroke-width="1.6"/>
<text x="37" y="647" font-size="15" font-weight="bold" fill="#fff" stroke="#111" stroke-width="2.5" paint-order="stroke">フ</text>
<text x="37" y="666" font-size="15" font-weight="bold" fill="#fff" stroke="#111" stroke-width="2.5" paint-order="stroke">チ</text>
<!-- blue pen -->

<!-- sparkle on blue -->
<path d="M33.5 875.5 Q35 889 47 890.5 Q35 892 33.5 906 Q32 892 20 890.5 Q32 889 33.5 875.5 Z" fill="#4a4d5a"/>
<path d="M47.5 896 Q48.3 902.3 54 903 Q48.3 903.7 47.5 910 Q46.7 903.7 41 903 Q46.7 902.3 47.5 896 Z" fill="#4a4d5a"/>
<!-- checker diamond -->
<defs><clipPath id="cpck"><rect x="17" y="931" width="40" height="40"/></clipPath></defs>
<rect x="17" y="931" width="40" height="40" fill="#a9a8f4"/>
<path clip-path="url(#cpck)" fill="#000" d="M8 914 L16 922 L8 930 L0 922 Z M8 930 L16 938 L8 946 L0 938 Z M8 946 L16 954 L8 962 L0 954 Z M8 962 L16 970 L8 978 L0 970 Z M8 978 L16 986 L8 994 L0 986 Z M24 914 L32 922 L24 930 L16 922 Z M24 930 L32 938 L24 946 L16 938 Z M24 946 L32 954 L24 962 L16 954 Z M24 962 L32 970 L24 978 L16 970 Z M24 978 L32 986 L24 994 L16 986 Z M40 914 L48 922 L40 930 L32 922 Z M40 930 L48 938 L40 946 L32 938 Z M40 946 L48 954 L40 962 L32 954 Z M40 962 L48 970 L40 978 L32 970 Z M40 978 L48 986 L40 994 L32 986 Z M56 914 L64 922 L56 930 L48 922 Z M56 930 L64 938 L56 946 L48 938 Z M56 946 L64 954 L56 962 L48 954 Z M56 962 L64 970 L56 978 L48 970 Z M56 978 L64 986 L56 994 L48 986 Z M72 914 L80 922 L72 930 L64 922 Z M72 930 L80 938 L72 946 L64 938 Z M72 946 L80 954 L72 962 L64 954 Z M72 962 L80 970 L72 978 L64 970 Z M72 978 L80 986 L72 994 L64 986 Z"/>
<!-- color swatches -->
<rect x="33.5" y="1585.5" width="49" height="49" rx="7" fill="none" stroke="#6a6a6a" stroke-width="2.2"/>
<rect x="39" y="1591" width="38" height="38" fill="#bababa"/>
<rect x="3.5" y="1559" width="50" height="50" rx="8" fill="#7b8cc4"/>
<rect x="7.5" y="1563" width="42" height="42" rx="5" fill="#000" stroke="#3c3c3c" stroke-width="1.6"/>
<rect x="3.5" y="1639" width="79" height="26" rx="9" fill="none" stroke="#6a6a6a" stroke-width="2"/>
<defs><pattern id="ck1" x="9" y="1645" width="22" height="14" patternUnits="userSpaceOnUse"><rect width="22" height="14" fill="#fff"/><rect x="11" width="11" height="7" fill="#8a8a8a"/><rect y="7" width="11" height="7" fill="#8a8a8a"/></pattern></defs>
<rect x="9" y="1645" width="68" height="14" rx="4" fill="url(#ck1)"/>
</svg>

<!-- ===== panels column ===== -->
<div class="a" style="left:88px;top:128px;width:340px;height:1540px;background:#323232"></div>
<div class="a" style="left:88px;top:129px;width:338px;height:259px;background:#3a3a3a"></div>
<div class="a" style="left:88px;top:392px;width:338px;height:92px;background:#3a3a3a"></div>
<div class="a" style="left:88px;top:488px;width:338px;height:352px;background:#3a3a3a"></div>
<div class="a" style="left:88px;top:844px;width:338px;height:392px;background:#3a3a3a"></div>
<div class="a" style="left:88px;top:1240px;width:338px;height:428px;background:#3a3a3a"></div>
<!-- tabs -->
<div class="a" style="left:134px;top:144px;width:152px;height:28px;background:#4e4e4e"></div>
<div class="a" style="left:88px;top:172px;width:338px;height:10px;background:#4e4e4e"></div>
<div class="a" style="left:90px;top:182px;width:334px;height:104px;background:#2d2d2d"></div>
<div class="a" style="left:88px;top:286px;width:338px;height:102px;background:#4e4e4e"></div>

<div class="a" style="left:134px;top:406px;width:158px;height:28px;background:#4e4e4e"></div>
<div class="a" style="left:88px;top:434px;width:338px;height:10px;background:#4e4e4e"></div>
<div class="a" style="left:88px;top:444px;width:338px;height:40px;background:#404040"></div>

<div class="a" style="left:134px;top:502px;width:134px;height:28px;background:#4e4e4e"></div>
<div class="a" style="left:88px;top:530px;width:338px;height:310px;background:#4e4e4e"></div>

<div class="a" style="left:134px;top:858px;width:250px;height:28px;background:#4e4e4e"></div>
<div class="a" style="left:88px;top:886px;width:338px;height:10px;background:#4e4e4e"></div>
<div class="a" style="left:90px;top:898px;width:334px;height:76px;background:#4f4f4f"></div>
<div class="a" style="left:88px;top:976px;width:338px;height:212px;background:#3e3e3e"></div>
<div class="a" style="left:88px;top:1188px;width:338px;height:48px;background:#4e4e4e"></div>

<div class="a" style="left:134px;top:1254px;width:116px;height:28px;background:#4e4e4e"></div>
<div class="a" style="left:251px;top:1253px;width:144px;height:29px;background:#353535"></div><div class="a" style="left:252px;top:1254px;width:142px;height:26px;background:#4c4c4c;overflow:hidden"><div class="t" style="left:59px;top:7px;font-size:21px;transform:scaleX(0.88);transform-origin:0 0;color:#8a8a8a">오토 액션</div><svg style="left:0;top:0" width="142" height="26" viewBox="252 1254 142 26"><g fill="#8a8a8a"><path d="M268 1262 L295 1255.5 L296.5 1260.5 L275 1265.5 Z"/><path d="M268 1266 H296 V1282 H292 V1270 H272 V1282 H268 Z"/><path d="M272 1269 L275 1273 H279 L276 1269 Z M281 1269 L284 1273 H288 L285 1269 Z M290 1269 L293 1273 V1269 Z"/><path d="M280 1274 L287 1280 H280 Z"/></g></svg></div>
<div class="a" style="left:88px;top:1282px;width:338px;height:168px;background:#4e4e4e"></div>
<div class="a" style="left:88px;top:1450px;width:338px;height:214px;background:#3d3d3d"></div>

<!-- tab texts -->
<div class="t" style="left:190px;top:151px;font-size:21px;transform:scaleX(0.865);transform-origin:0 0;color:#d8d8d8">내비게이터</div>
<div class="t" style="left:190px;top:413px;font-size:21px;transform:scaleX(0.877);transform-origin:0 0;color:#d8d8d8">레이어 속성</div>
<div class="t" style="left:190px;top:509px;font-size:21px;transform:scaleX(0.896);transform-origin:0 0;color:#d8d8d8">컬러써클</div>
<div class="t" style="left:190px;top:865px;font-size:21px;transform:scaleX(0.884);transform-origin:0 0;color:#d8d8d8">도구 속성[레이어 이동]</div>
<div class="t" style="left:190px;top:1261px;font-size:21px;transform:scaleX(0.886);transform-origin:0 0;color:#d8d8d8">레이어</div>


<!-- navigator -->
<div class="a" style="left:226px;top:184px;width:62px;height:98px;background:#fff"></div>
<svg style="left:226px;top:184px" width="62" height="98" viewBox="736 326 824 1303" preserveAspectRatio="none">
<!-- light sketch layer -->
<g fill="none" stroke="#f0f0f0" stroke-width="12.2" stroke-linecap="round">
<path d="M1030 600 Q1010 520 1040 470 Q1090 420 1180 425 Q1260 430 1290 480 Q1310 540 1290 600"/>
<path d="M1020 560 Q1015 500 1060 460 Q1120 425 1200 440 Q1275 460 1300 520"/>
<path d="M1040 640 Q1030 600 1045 570 M1270 640 Q1300 600 1310 560"/>
<path d="M1290 500 Q1330 470 1360 510 Q1370 550 1340 580"/>
<path d="M870 760 Q900 700 990 690 Q1060 680 1110 700 M850 790 Q880 730 960 710 Q1040 695 1130 715"/>
<path d="M850 830 Q830 880 880 900 Q960 920 1000 880 Q1030 830 1000 780"/>
<path d="M855 720 Q800 760 820 840 Q850 880 900 885"/>
<path d="M880 870 Q830 1000 790 1120 Q770 1200 790 1290"/>
<path d="M900 860 Q860 1000 840 1130 Q815 1250 830 1400"/>
<path d="M760 1180 Q790 1100 820 1000 Q840 920 870 880"/>
<path d="M770 1150 Q800 1250 840 1330 Q852 1360 855 1375"/>
<path d="M817 1160 Q825 1280 855 1400"/>
<path d="M940 1000 Q900 1100 880 1200 Q860 1300 856 1425"/>
<path d="M960 960 Q950 1100 960 1250"/>
<path d="M1000 1050 Q1000 1150 1010 1250"/>
<path d="M1060 1100 Q1080 1200 1090 1300 Q1090 1400 1095 1520"/>
<path d="M1040 1200 Q1080 1260 1105 1380"/>
<path d="M1125 1350 Q1140 1450 1160 1540 M1140 1320 Q1130 1450 1100 1540"/>
<path d="M1220 1200 Q1230 1300 1205 1480 Q1195 1540 1190 1580"/>

<path d="M1180 930 Q1230 1000 1300 1060 Q1380 1120 1420 1180"/>
<path d="M1300 760 Q1350 850 1380 960 Q1420 1080 1440 1200 Q1455 1300 1440 1390"/>
<path d="M1340 760 Q1420 850 1460 980 Q1500 1120 1490 1260 Q1470 1380 1430 1440"/>
<path d="M1230 700 Q1300 730 1340 800 Q1390 900 1400 1000"/>
<path d="M1250 650 Q1330 690 1400 770 Q1470 850 1480 940"/>

<path d="M1390 1200 Q1440 1320 1470 1440 Q1490 1500 1495 1520"/>
<path d="M1010 1130 Q1060 1120 1120 1110 Q1190 1100 1250 1120"/>
<path d="M900 1085 Q980 1040 1050 1030 Q1150 1020 1250 1060"/>
<path d="M960 780 Q1030 760 1100 770 Q1150 790 1200 830"/>
<path d="M1060 800 Q1090 860 1120 920 Q1150 960 1190 990"/>
<path d="M1130 780 Q1160 840 1170 900"/>
<path d="M1270 800 Q1250 900 1220 980"/>
<path d="M1310 560 Q1330 620 1320 700 Q1310 760 1300 800"/>
<path d="M1060 560 Q1050 620 1070 680"/>

<path d="M835 1375 Q850 1300 890 1240 Q940 1190 1000 1180"/>
</g>
<!-- main line art -->
<g fill="none" stroke="#a0a0a0" stroke-width="5.9" stroke-linecap="round" stroke-linejoin="round">
<!-- ears -->
<path d="M1014 380 Q1012 420 1014 452 Q1016 472 1024 484 L1028 480 L1030 494 L1036 500"/>
<path d="M1014 381 L1098 449"/>
<path d="M1225 337 L1154 432"/>
<path d="M1225 337 Q1229 370 1232 407 L1238 424 L1236 440 L1242 452 L1236 462 L1240 470 L1229 472"/>
<path d="M1222 354 Q1212 400 1201 452" stroke="#999" stroke-width="5.2"/>
<path d="M1018 392 Q1040 440 1060 468" stroke="#999" stroke-width="5.2"/>
<!-- head top & hair -->
<path d="M1085 439 Q1120 420 1164 418"/>
<path d="M1097 449 Q1060 470 1042 505 Q1026 540 1030 580 Q1034 612 1050 645"/>
<path d="M1082 472 Q1058 520 1058 575 Q1060 615 1078 650" stroke-width="5.6"/>
<path d="M1128 445 Q1115 470 1113 510 Q1112 550 1108 585" stroke-width="6.1"/>
<path d="M1140 443 Q1170 475 1184 530 Q1193 570 1196 612" stroke-width="7.5"/>
<path d="M1122 470 Q1130 520 1160 555 Q1175 570 1190 578" stroke-width="5.6"/>
<path d="M1155 440 Q1200 470 1218 535 Q1226 565 1228 600"/>
<path d="M1170 440 Q1235 465 1265 520 Q1282 560 1286 600" stroke-width="5.6"/>
<path d="M1238 470 Q1268 480 1282 515 Q1292 550 1287 592 Q1283 612 1275 632"/>
<path d="M1075 600 Q1085 620 1100 630 M1210 600 Q1205 625 1195 640" stroke-width="5.6"/>
<!-- bun -->
<path d="M1290 492 Q1318 478 1340 498 Q1354 518 1346 550 Q1338 570 1318 578"/>
<path d="M1288 480 Q1300 468 1315 472" stroke-width="5.2"/>
<!-- face -->
<path d="M1088 598 Q1100 628 1122 645 Q1140 660 1157 661 Q1185 652 1212 632"/>
<path d="M1075 578 Q1098 580 1112 583 Q1118 585 1121 592 Q1112 586 1100 586 Q1086 585 1077 582 Z" fill="#666" stroke="none"/><path d="M1072 574 L1082 580 M1090 578 L1100 580" stroke-width="4.7"/>
<path d="M1099 586 Q1104 597 1114 600 Q1119 597 1117 588" stroke-width="7.1"/><path d="M1096 601 Q1106 605 1116 602" stroke-width="5.2"/>
<path d="M1148 590 Q1160 576 1180 572 Q1198 568 1212 568 Q1205 574 1198 586 Q1190 578 1178 578 Q1162 580 1148 590 Z" fill="#666" stroke="none"/><path d="M1195 568 L1212 560 M1185 570 L1197 563" stroke-width="4.7"/>
<path d="M1168 579 Q1166 592 1180 593 Q1194 593 1194 580" stroke-width="8.5"/><path d="M1166 595 Q1182 597 1196 594" stroke-width="4.7"/>
<path d="M1128 630 Q1138 635 1145 634 M1150 634 Q1157 633 1162 629" stroke-width="8.5"/>
<path d="M1128 612 L1129 615" stroke-width="6.6"/>
<path d="M1146 664 Q1176 682 1207 665" stroke="#555" stroke-width="23.5"/>
<path d="M1144 660 V700 M1213 640 Q1212 670 1206 700" stroke-width="6.1"/>
<!-- collar / shoulders -->
<path d="M1030 676 L1110 656 M985 690 L1060 672 M1110 656 Q1120 660 1140 700"/>
<path d="M1026 682 Q990 680 940 686 Q900 700 873 740 Q846 770 842 786 Q846 815 865 826 Q900 830 953 813 Q970 806 982 799"/>
<path d="M880 810 Q910 800 940 806" stroke-width="5.2"/>
<path d="M962 702 Q950 740 962 780 M986 698 Q976 735 990 775 M1005 700 Q998 730 1010 760" stroke-width="5.6"/>
<path d="M1010 690 Q1050 700 1086 748 M1030 694 Q1068 712 1092 762 M1050 692 Q1080 720 1095 745" stroke-width="5.6"/>
<ellipse cx="1091" cy="770" rx="9" ry="22" transform="rotate(-15 1091 770)"/>
<ellipse cx="1103" cy="815" rx="10" ry="25" transform="rotate(-12 1103 815)"/>
<path d="M1110 745 L1130 735 L1145 755 L1128 775 Z M1120 730 L1135 725 M1130 770 L1148 800" stroke-width="6.1"/>
<path d="M1060 780 L1080 840 L1110 850 L1150 830 L1140 780" stroke-width="5.2"/>
<!-- hair strands left of body -->
<path d="M1007 745 Q988 772 986 800 Q996 830 1000 852 Q996 876 984 889"/>
<path d="M1022 740 Q1005 780 1016 822 Q1022 850 1010 870" stroke-width="5.6"/>
<path d="M1034 764 Q1030 820 1029 880"/>
<path d="M1058 820 Q1062 860 1068 900 M1075 830 Q1082 870 1085 905" stroke-width="5.2"/>
<!-- cape left -->
<path d="M888 832 Q850 960 829 1080 Q825 1220 870 1346"/>
<path d="M912 829 Q892 960 880 1080 L870 1348"/>
<path d="M966 889 L974 1080 L982 1220"/>
<path d="M872 1221 Q920 1180 974 1173 Q1000 1175 1001 1188 Q998 1210 982 1220 Q1010 1216 1049 1203" stroke-width="6.1"/>
<!-- belts -->
<path d="M1034 905 Q1100 936 1200 937"/>
<path d="M1029 970 Q1100 986 1200 978 L1216 970 L1229 980"/>
<path d="M1029 937 C1060 990 1140 1025 1176 1021 C1200 1018 1215 1010 1226 1000"/>
<path d="M1040 990 C1080 1040 1140 1070 1176 1067 C1205 1062 1225 1045 1239 1026"/>
<path d="M1037 1002 L1060 971 L1093 986 L1097 1027 L1058 1024 Z"/>
<path d="M1172 1018 Q1170 1040 1174 1065 M1186 1016 Q1185 1040 1189 1066"/>
<!-- legs -->
<path d="M1029 1027 Q1015 1050 1019 1080 Q1050 1200 1090 1337 Q1080 1420 1079 1516"/>
<path d="M1125 1113 Q1110 1220 1090 1337"/>
<path d="M1229 982 Q1262 1020 1270 1070 Q1272 1110 1262 1145 Q1240 1220 1209 1281 Q1196 1310 1193 1324 Q1170 1450 1142 1583"/>
<path d="M1194 1333 Q1215 1420 1213 1540"/>

<!-- coat right -->
<path d="M1220 650 L1326 740 L1242 761 L1237 802 L1305 802 L1291 948"/>
<path d="M1229 660 L1312 735" stroke-width="5.2"/>
<path d="M1201 718 Q1250 900 1351 1100"/>
<path d="M1307 758 Q1400 930 1473 1100"/>
<path d="M1336 1080 Q1390 1300 1412 1411"/>
<path d="M1462 1080 Q1485 1130 1481 1177 Q1480 1300 1412 1411"/>
<path d="M1321 1177 Q1360 1195 1384 1218"/>
<path d="M1283 808 L1287 817 L1296 820 L1287 823 L1283 832 L1279 823 L1270 820 L1279 817 Z" stroke-width="5.2"/>
<path d="M1283 832 Q1275 880 1270 890 Q1262 895 1255 870" stroke-width="5.2"/>
<!-- hand right -->
<path d="M1275 1064 Q1300 1070 1325 1060 M1276 1075 Q1300 1078 1324 1070 M1266 1076 Q1262 1110 1268 1130 Q1290 1150 1310 1148 Q1335 1140 1350 1100 M1320 1075 Q1345 1090 1352 1100 M1276 1150 Q1274 1190 1278 1196 Q1282 1197 1284 1185 L1286 1160 M1296 1160 Q1293 1200 1300 1228 Q1304 1232 1306 1225 Q1310 1190 1318 1170 M1232 987 L1270 995 L1280 1033 M1240 970 L1262 990"/>

<!-- hair right -->
<path d="M1326 650 Q1410 720 1440 772 Q1452 825 1402 862 Q1380 872 1340 872"/>
<path d="M1395 740 Q1428 800 1410 850 Q1395 870 1370 880" stroke-width="5.6"/>
<path d="M1380 750 Q1400 820 1385 860" stroke-width="5.2"/>
<path d="M1398 870 Q1440 900 1452 960 Q1448 1000 1438 1020 Q1452 1042 1476 1002"/>
<path d="M1355 900 Q1418 958 1420 1040 Q1430 1062 1462 1052" stroke-width="5.6"/>
<path d="M1400 880 Q1440 870 1468 866" stroke-width="5.6"/>
<path d="M1290 650 Q1320 720 1330 780" stroke-width="5.2"/>
<path d="M1190 700 Q1175 760 1185 820 Q1190 850 1170 880" stroke-width="5.6"/>
<path d="M1170 860 Q1150 880 1162 920 Q1170 945 1158 960" stroke-width="5.2"/>
<path d="M1260 740 Q1280 800 1270 860" stroke-width="5.2"/>
</g>
<g fill="none" stroke="#f0f0f0" stroke-width="11.3" stroke-linecap="round">
<path d="M866 686 Q780 720 786 800 Q800 880 880 895 Q960 900 985 830 Q1000 760 930 700"/>
<path d="M870 760 Q960 690 1080 665 Q1180 650 1260 680"/>
<path d="M840 840 Q880 770 990 730 Q1090 700 1180 720"/>
<path d="M1110 700 Q1130 760 1150 830 Q1170 900 1200 960"/>
<path d="M1280 500 Q1300 560 1300 640 M1250 540 Q1270 600 1262 680"/>
<path d="M1290 760 Q1320 820 1360 900 Q1400 980 1420 1060"/>

<path d="M1340 950 Q1380 1000 1430 1020 M1250 880 Q1330 940 1400 940"/>
<path d="M1010 900 Q1060 960 1120 980 Q1180 1000 1260 990"/>
<path d="M1050 1060 Q1100 1080 1180 1080 Q1240 1080 1300 1060"/>
<path d="M960 830 Q940 900 950 980 Q955 1040 965 1100"/>
<path d="M1050 480 Q1040 530 1048 580 M1070 460 Q1060 520 1070 580"/>
<path d="M1230 470 Q1260 520 1268 580 Q1270 620 1255 660"/>
<path d="M1095 570 Q1130 560 1200 562 Q1240 566 1260 580"/>
</g>
<g fill="none" stroke="#a0a0a0" stroke-width="5.4" stroke-linecap="round" stroke-linejoin="round">
<path d="M1242 440 Q1270 460 1280 488 Q1290 520 1286 540 Q1282 570 1276 580 Q1262 610 1238 623 Q1210 635 1180 633"/>
<path d="M1288 590 Q1300 620 1315 643 Q1340 670 1373 681 Q1410 700 1435 760"/>
<path d="M1267 594 Q1285 625 1300 652 Q1322 700 1340 760"/>
<path d="M1280 600 Q1300 660 1323 710" stroke-width="4.7"/>
<path d="M1238 598 Q1225 650 1215 691 Q1205 730 1199 760"/>
<path d="M1180 484 Q1195 520 1195 556 Q1192 590 1180 614"/>
<path d="M1236 548 Q1232 580 1222 600 Q1210 620 1200 625" stroke-width="5.2"/>
<path d="M1288 540 Q1300 555 1302 575 M1300 510 Q1312 520 1312 540" stroke-width="4.7"/>
<!-- sleeve top / collar -->
<path d="M975 691 L994 680 L1023 686 L1061 675"/>
<path d="M1028 674 L1124 650 M1030 676 Q1090 690 1142 708"/>
<path d="M876 807 Q900 800 942 817" stroke-width="5.2"/>
<path d="M990 696 Q960 730 982 773 M1001 696 Q1004 720 1004 745 Q990 770 978 792 M1018 689 Q1012 720 1022 745" stroke-width="5.2"/>
<path d="M1038 708 L1090 768 M1053 710 L1094 760 M1023 724 L1083 765 M1060 698 Q1080 710 1100 745" stroke-width="5.2"/>
<ellipse cx="1087" cy="763" rx="12" ry="24" transform="rotate(-18 1087 763)" stroke-width="7.5"/>
<ellipse cx="1098" cy="818" rx="14" ry="27" transform="rotate(-14 1098 818)" stroke-width="7.5"/>
<path d="M1108 753 L1125 745 L1135 765 L1118 775 Z M1130 740 L1145 730 L1150 748 Z M1138 770 L1152 765 L1155 780 Z M1140 780 Q1155 810 1165 830" stroke-width="5.6"/>
<path d="M1036 741 Q1030 830 1029 920 M1048 790 Q1060 850 1072 920 M1060 790 Q1075 860 1090 920 M1095 845 Q1105 880 1112 920" stroke-width="5.2"/>
<circle cx="1082.5" cy="878" r="2" stroke-width="5.2"/><circle cx="1086.7" cy="911.8" r="2" stroke-width="5.2"/>
<path d="M1019 734 Q995 770 982 799 Q978 815 980 826 Q992 845 999 859 Q1002 868 997 873 Q990 882 984 888"/>
<path d="M1028 744 Q1015 790 997 826 Q1005 838 1021 841" stroke-width="5.2"/>
<path d="M1040 760 Q1032 800 1040 820" stroke-width="4.7"/>
<!-- right hair lower waves -->
<path d="M1340 820 Q1365 870 1368 930 Q1372 980 1360 1000" stroke-width="5.2"/>
<path d="M1430 880 Q1475 890 1468 866 M1420 920 Q1450 960 1440 1000 Q1436 1030 1460 1045 Q1478 1040 1476 1002" stroke-width="5.2"/>
<path d="M1248 745 Q1262 700 1290 690" stroke-width="4.7"/>
</g>
</svg>
<div class="a" style="left:208px;top:184px;width:130px;height:100px;border:2.5px solid #ef3322;border-top:none"></div>
<div class="t" style="left:138px;top:300.5px;font-size:23.5px;transform:scaleX(0.87);transform-origin:0 0;color:#d8d8d8">41.2</div>
<div class="t" style="left:147.5px;top:348.5px;font-size:23.5px;transform:scaleX(0.9);transform-origin:0 0;color:#d8d8d8">0.0</div>
<div class="a" style="left:326px;top:299px;width:2px;height:36px;background:#777"></div>
<div class="a" style="left:326px;top:346px;width:2px;height:38px;background:#777"></div>
<div class="a" style="left:124px;top:540px;width:266px;height:266px;border-radius:50%;background:conic-gradient(from 0deg,#eee358,#a8e44a 40deg,#62e24a 75deg,#5ee89a 105deg,#60e4ea 135deg,#3f8ee6 160deg,#1818e6 185deg,#6a18e6 215deg,#dc34e6 245deg,#e0308a 275deg,#e03040 300deg,#e2622c 325deg,#eee358);-webkit-mask:radial-gradient(circle,transparent 108px,#000 109px,#000 132px,transparent 133px);mask:radial-gradient(circle,transparent 108px,#000 109px,#000 132px,transparent 133px)"></div>
<svg style="left:0;top:0" width="440" height="1668" viewBox="0 0 440 1668">
<defs>
<linearGradient id="sqh" x1="0" y1="0" x2="1" y2="0"><stop offset="0" stop-color="#fff"/><stop offset="1" stop-color="#e8352a"/></linearGradient>
<linearGradient id="sqv" x1="0" y1="0" x2="0" y2="1"><stop offset="0" stop-color="#000" stop-opacity="0"/><stop offset="1" stop-color="#000" stop-opacity="1"/></linearGradient>
<pattern id="ck2" x="0" y="0" width="10" height="10" patternUnits="userSpaceOnUse"><rect width="10" height="10" fill="#fff"/><rect width="5" height="5" fill="#c8c8c8"/><rect x="5" y="5" width="5" height="5" fill="#c8c8c8"/></pattern>
</defs>
<!-- hamburgers -->
<g stroke="#8a8a8a" stroke-width="2" fill="none">
<path d="M104 147 H118 M104 153 H118 M104 159 H118"/>
<path d="M104 409 H118 M104 415 H118 M104 421 H118"/>
<path d="M104 505 H118 M104 511 H118 M104 517 H118"/>
<path d="M104 861 H118 M104 867 H118 M104 873 H118"/>
<path d="M104 1257 H118 M104 1263 H118 M104 1269 H118"/>
</g>
<g fill="none" stroke="#bababa" stroke-width="2.2" stroke-linecap="round" stroke-linejoin="round">
<!-- navigator icon -->
<rect x="153" y="153" width="22" height="18.5" rx="3"/>
<path d="M153 157 H152 Q149 157 149 160 V172 Q149 175 152 175 H168 Q171 175 171 172 V171"/>
<!-- nav controls -->
<circle cx="202" cy="315.8" r="14.3"/><path d="M193.5 315.8 H210.5"/>
<circle cx="249.7" cy="315.8" r="14.3"/><path d="M241.2 315.8 H258.2 M249.7 307.3 V324.3"/>
<circle cx="298" cy="315.8" r="14.3"/>
<rect x="341.5" y="303" width="16" height="15.5" rx="2.5"/>
<rect x="351" y="313" width="16" height="15.5" rx="2.5"/>
<path d="M346 308 L362 324"/>
<rect x="391" y="305" width="22" height="22" rx="3"/>
<path d="M396 310 L408 322"/>
<path d="M203.3 375.3 A11.5 11.5 0 1 0 192 362.5"/>
<path d="M247.5 375.3 A11.5 11.5 0 1 1 258.8 362.5"/>
<path d="M297.7 350.5 V363.8 M297.7 350.5 A13.3 13.3 0 1 1 285 368"/>
<path d="M340 356.5 L349.5 364 L340 371.5 Z M354 351.5 V376.5 M390 364 H414.5 M394 378.5 L401.7 368.5 L409.5 378.5 Z"/>
<!-- layer props icon -->
<path d="M150.5 420 L163 411.5 L176 420 L172 424 M150.5 420 L158 426 M150.5 427 L164 436 M150.5 434 L164 442" stroke-width="2"/>
<!-- color circle icon -->
<circle cx="162" cy="521.7" r="13"/>
<!-- tool prop icon: gear -->
<circle cx="169.5" cy="885.5" r="4.5" stroke-width="2"/>
<path d="M169.5 877 V879 M169.5 892 V894 M161 885.5 H163 M176 885.5 H178 M163.5 879.5 L165 881 M174 890 L175.5 891.5 M175.5 879.5 L174 881 M165 890 L163.5 891.5" stroke-width="2"/>
<!-- layer icon -->
<path d="M150 1267 L162 1260 L174 1267 L162 1274 Z M150 1274 L162 1281 L174 1274 M150 1281 L162 1288 L174 1281" stroke-width="2"/>
<!-- lock icon in button -->
<!-- timer & wrench -->
<path d="M341.5 1198.5 V1212 M341.5 1198.5 A13.5 13.5 0 1 1 328.5 1209"/>
<path d="M388.4 1201 L395.9 1205.8 V1210.3 L393.2 1211.4 L385.4 1206.3 Q384.6 1212.5 389.3 1215.7 Q392.5 1217.6 397.1 1217.5 Q399.5 1217.8 401 1219.3 L405.5 1223.8 Q406.9 1225 408.3 1223.8 L410 1222.2 Q411.3 1220.8 410 1219.5 L404.5 1213.9 Q402.8 1212 403 1209 Q403.3 1203.5 399.6 1200.4 Q394.5 1196.8 388.4 1201 Z" stroke-width="2.1"/>
</g>
<g fill="#bababa">
<rect x="155.5" y="155.5" width="17" height="13.5" fill="#888"/>
<rect x="291" y="309" width="14" height="14" rx="2"/>
<path d="M344 306 L352 307 L345 314 Z M364 326 L356 325 L363 318 Z"/>
<path d="M394 308 L401.5 308.5 L394.5 315.5 Z M410 324 L402.5 323.5 L409.5 316.5 Z"/>
<path d="M188 362 H198.4 L193.2 370.5 Z M252.6 362 H263 L257.8 370.5 Z"/>
<circle cx="297.7" cy="363.8" r="4"/>
<circle cx="290" cy="351.5" r="1.4"/><circle cx="285.5" cy="355" r="1.4"/><circle cx="283" cy="359.5" r="1.4"/>
<path d="M369.5 356 V372.5 L357.5 364 Z M393 349 H410.5 L401.7 360.5 Z"/>
<!-- layer prop icon dots -->
<circle cx="167" cy="431" r="2" fill="none" stroke="#bababa" stroke-width="1.5"/><circle cx="175" cy="431" r="2.5"/>
<rect x="172" y="437" width="5.5" height="5.5" fill="none" stroke="#bababa" stroke-width="1.5"/>
<path d="M164 437 L169 442 M169 437 L164 442" stroke="#bababa" stroke-width="1.2"/>
<rect x="155" y="514.5" width="14" height="14" rx="2.5"/>
<!-- pencil of tool prop -->
<path d="M151 893 L154 884 L173 865 Q175.5 862.5 178 865 Q180.5 867.5 178 870 L159 889 Z"/>
<!-- timer dot -->
<circle cx="341.5" cy="1212" r="3.8"/>
<circle cx="334" cy="1200.5" r="1.3"/><circle cx="330.5" cy="1203.5" r="1.3"/><circle cx="328.5" cy="1207" r="1.3"/>
</g>


<!-- layer props content -->
<g stroke="#8c8c8c" stroke-width="1.6" fill="none">
<path d="M98 463 H105 M150.5 463 H403.5"/>
<path d="M202 484 V482 Q202 478.5 206 478.5 H402 Q406 478.5 406 482 V484" stroke="#5e5e5e" stroke-width="1.5"/>
</g>
<rect x="414" y="448" width="8" height="20" rx="4" fill="#5a5a5a"/>

<!-- color circle -->

<circle cx="257" cy="673" r="131.5" fill="none" stroke="#333" stroke-width="1.2"/>
<circle cx="257" cy="673" r="108.8" fill="none" stroke="#333" stroke-width="1.2"/>
<rect x="188.5" y="603.5" width="137" height="137" fill="#333"/>
<rect x="189.5" y="604.5" width="135" height="135" fill="url(#sqh)"/>
<rect x="189.5" y="604.5" width="135" height="135" fill="url(#sqv)"/>
<g transform="rotate(31 152.5 612.5)"><rect x="140.5" y="602.5" width="24" height="20" fill="#111"/><rect x="143.5" y="605.5" width="18" height="14" fill="#e03040" stroke="#fff" stroke-width="3"/></g>
<circle cx="194.8" cy="740.8" r="8" fill="none" stroke="#111" stroke-width="4.5"/>
<circle cx="194.8" cy="740.8" r="8" fill="none" stroke="#fff" stroke-width="2.4"/>
<!-- swatches in color panel -->
<rect x="109" y="771" width="37.5" height="37.5" rx="6" fill="none" stroke="#6a6a6a" stroke-width="1.8"/>
<rect x="114.5" y="776.5" width="27" height="27" fill="#bababa"/>
<rect x="89" y="755" width="39" height="39" rx="7" fill="#7b8cc4"/>
<rect x="93.5" y="759.5" width="30" height="30" rx="4" fill="#000" stroke="#3c3c3c" stroke-width="1.4"/>
<rect x="89.5" y="813" width="57" height="20" rx="8" fill="none" stroke="#6a6a6a" stroke-width="1.8"/>
<defs><pattern id="ck3" x="95" y="818" width="16" height="10" patternUnits="userSpaceOnUse"><rect width="16" height="10" fill="#fff"/><rect x="8" width="8" height="5" fill="#8a8a8a"/><rect y="5" width="8" height="5" fill="#8a8a8a"/></pattern></defs>
<rect x="95" y="818" width="46" height="10" rx="4" fill="url(#ck3)"/>
<rect x="164.5" y="812.5" width="15" height="15" rx="1.5" fill="#a42018" stroke="#333" stroke-width="1.4"/>
<rect x="228.5" y="812.5" width="15" height="15" rx="1.5" fill="#4fb43a" stroke="#333" stroke-width="1.4"/>
<rect x="292.5" y="812.5" width="15" height="15" rx="1.5" fill="#0a0ad8" stroke="#333" stroke-width="1.4"/>
<circle cx="391.5" cy="809.5" r="14" fill="none" stroke="#b0b0b0" stroke-width="2.4"/>
<path d="M386 799 V820 L402 809.5 Z" fill="none" stroke="#b0b0b0" stroke-width="2.2" stroke-linejoin="round"/>

<!-- tool prop: lock button -->
<rect x="366" y="924" width="56" height="48" rx="5" fill="#6b7089"/>
<path d="M388 945 V942 Q388 936.5 393.5 936.5 Q399 936.5 399 942 V945" fill="none" stroke="#bababa" stroke-width="2.6"/>
<rect x="385.5" y="944.5" width="16" height="13" rx="1.5" fill="#bababa"/>
<!-- segmented -->
<rect x="246.5" y="982.5" width="158" height="47" rx="4" fill="#555" stroke="#6e6e6e" stroke-width="1.2"/>
<path d="M250.5 982.5 H290 V1029.5 H250.5 Q246.5 1029.5 246.5 1025.5 V986.5 Q246.5 982.5 250.5 982.5 Z" fill="#7884ad"/>
<g fill="none" stroke="#c0c0c0" stroke-width="2" stroke-linecap="round" stroke-linejoin="round">
<rect x="255" y="992.5" width="26.5" height="27" rx="3.5"/>
<path d="M256 1010 L264 1018.5"/>
<path d="M342.5 993 V1019.5 M352.5 993 V1019.5 M362 993 V1010 M342.5 996 H369.5 M342.5 1005.5 H369.5 M342.5 1015 H356 M362 1013 V1020 M358.5 1016.5 H366" stroke-width="1.8"/>
<path d="M383.5 996.5 L391 989 L398.5 996.5 M383.5 1016 L391 1023.5 L398.5 1016"/>
</g>
<g fill="#c0c0c0">
<circle cx="300" cy="994" r="2"/><circle cx="311.5" cy="994" r="2"/><circle cx="323" cy="994" r="2"/>
<circle cx="305.8" cy="1000" r="2"/><circle cx="317.3" cy="1000" r="2"/>
<circle cx="300" cy="1006" r="2"/><circle cx="311.5" cy="1006" r="2"/><circle cx="323" cy="1006" r="2"/>
<circle cx="305.8" cy="1012" r="2"/><circle cx="317.3" cy="1012" r="2"/>
<circle cx="300" cy="1018" r="2"/><circle cx="311.5" cy="1018" r="2"/><circle cx="323" cy="1018" r="2"/>
</g>
<!-- checkboxes -->
<rect x="122.5" y="1046.5" width="27.5" height="27.5" rx="4" fill="#4c4c4c" stroke="#5e5e5e" stroke-width="1.2"/>
<rect x="122.5" y="1100" width="27.5" height="27.5" rx="4" fill="#4c4c4c" stroke="#5e5e5e" stroke-width="1.2"/>
<rect x="122" y="1153.5" width="28" height="28" rx="4" fill="#434343"/>
<path d="M127.5 1167 L134 1174 L144.5 1158.5" fill="none" stroke="#767676" stroke-width="3.4" stroke-linecap="round"/>
<rect x="414" y="980" width="8" height="198" rx="4" fill="#505050"/>
</svg>
<!-- text in panels -->
<div class="t" style="left:108px;top:451px;font-size:21px;transform:scaleX(0.95);transform-origin:0 0;color:#d8d8d8">효과</div>
<div class="t" style="left:202px;top:809.5px;font-size:23.5px;color:#d8d8d8">0</div>
<div class="t" style="left:266px;top:809.5px;font-size:23.5px;color:#d8d8d8">0</div>
<div class="t" style="left:330px;top:809.5px;font-size:23.5px;color:#d8d8d8">0</div>
<div class="t" style="left:92px;top:901px;font-size:21px;transform:scaleX(0.94);transform-origin:0 0;color:#d8d8d8">레이어 이동</div>
<div class="t" style="left:122px;top:993px;font-size:21px;transform:scaleX(0.94);transform-origin:0 0;color:#d8d8d8">이동 대상</div>
<div class="t" style="left:158px;top:1048.5px;font-size:21px;transform:scaleX(0.91);transform-origin:0 0;color:#d8d8d8">클릭 위치에 있는 대상 이동</div>
<div class="t" style="left:158px;top:1101.5px;font-size:21px;transform:scaleX(0.915);transform-origin:0 0;color:#d8d8d8">선택 범위 내 레이어 이동</div>
<div class="t" style="left:158px;top:1156px;font-size:21px;transform:scaleX(0.915);transform-origin:0 0;color:#838383">이동 대상을 선택 상태로 변경</div>

<!-- ===== layer panel ===== -->
<svg style="left:0;top:0" width="440" height="1668" viewBox="0 0 440 1668">
<defs>
<linearGradient id="opg" x1="0" y1="0" x2="1" y2="0"><stop offset="0" stop-color="#4e4e4e" stop-opacity="0"/><stop offset="1" stop-color="#4e4e4e" stop-opacity="0.35"/></linearGradient>
<pattern id="ck4" x="268" y="1302.5" width="20" height="17.4" patternUnits="userSpaceOnUse"><rect width="20" height="17.4" fill="#fff"/><rect x="10" width="10" height="8.7" fill="#c4c4c4"/><rect y="8.7" width="10" height="8.7" fill="#c4c4c4"/></pattern>
<pattern id="ck5" x="236" y="1462" width="14" height="14" patternUnits="userSpaceOnUse"><rect width="14" height="14" fill="#fff"/><rect width="7" height="7" fill="#cfcfcf"/><rect x="7" y="7" width="7" height="7" fill="#cfcfcf"/></pattern>
</defs>
<rect x="90.5" y="1292.5" width="77.5" height="47.5" rx="5" fill="#5c5c5c" stroke="#6c6c6c" stroke-width="1.4"/>
<rect x="174.5" y="1292.5" width="81" height="47.5" rx="5" fill="#5c5c5c" stroke="#6c6c6c" stroke-width="1.4"/>
<rect x="268" y="1302.5" width="74.5" height="17.4" fill="url(#ck4)"/>
<rect x="268" y="1302.5" width="74.5" height="17.4" fill="url(#opg)"/>
<rect x="342.5" y="1292.5" width="7.5" height="40" rx="1" fill="#5e5e5e" stroke="#6e6e6e" stroke-width="1.2"/>
<g fill="none" stroke="#bababa" stroke-width="2.2" stroke-linecap="round" stroke-linejoin="round">
<rect x="100" y="1304" width="28.5" height="24.5" rx="4"/>
<path d="M142.5 1310 L151 1302 L159.5 1310 M142.5 1321 L151 1329.5 L159.5 1321"/>
<path d="M230.5 1310 L239 1302 L247.5 1310 M230.5 1321 L239 1329.5 L247.5 1321"/>
<path d="M403 1307 L410 1300 L417 1307 M403 1318 L410 1325 L417 1318"/>
<!-- row icons -->
<rect x="154.5" y="1352.5" width="21.5" height="21" rx="4" stroke-dasharray="4 2.6"/>
<path d="M205 1356.5 L213.5 1359.5 M222 1359.5 L230.5 1356.5 M205 1366.5 L213.5 1364 M222 1364 L230.5 1366.5 M214 1357.5 H221.5 V1366 H214 Z M217.7 1354 V1357.5" stroke-width="1.8"/>
<path d="M269 1365 V1359.5 Q269 1353 274 1353 Q279 1353 279 1359.5 V1365"/>
<path d="M321 1368.5 V1366 Q321 1361.5 325 1361.5 Q329 1361.5 329 1366 V1368.5" stroke-width="2"/>

<!-- row2 -->
<path d="M126 1405.5 H107 Q104.5 1405.5 104.5 1408 V1432 Q104.5 1434.5 107 1434.5 H122 M126 1405.5 Q130 1405.5 130 1409 V1422"/>
<path d="M218.5 1417.5 H217 Q214 1417.5 214 1420.5 V1433 Q214 1436 217 1436 H229 Q232 1436 232 1433 V1432 M227.5 1418 V1409 Q227.5 1406 230.5 1406 H243 Q246 1406 246 1409 V1420 Q246 1423 243 1423 H241"/>
<path d="M234 1423 Q234 1430 227 1430 H222"/>
<path d="M274 1417.5 H273 Q270 1417.5 270 1420.5 V1433 Q270 1436 273 1436 H285 Q288 1436 288 1433 V1432 M283.5 1418 V1409 Q283.5 1406 286.5 1406 H299 Q302 1406 302 1409 V1420 Q302 1423 299 1423 H288"/>
<path d="M288 1421 L277 1431"/>
<path d="M387.5 1410.5 H409 M393 1410.5 V1407.5 Q393 1406 394.5 1406 H402 Q403.5 1406 403.5 1407.5 V1410.5 M390 1410.5 L391 1431 Q391 1433.5 393.5 1433.5 H403 Q405.5 1433.5 405.5 1431 L406.5 1410.5 M395 1415 V1429 M398.5 1415 V1429 M402 1415 V1429" stroke-width="2"/>
</g>
<g fill="#bababa">
<rect x="148" y="1360" width="20.5" height="20.5" rx="4" fill="#858585"/>
<rect x="153" y="1358" width="15.5" height="15.5" rx="3"/>
<path d="M215 1380 L217.7 1366 L220.5 1380 Z"/>
<rect x="264" y="1363.5" width="20" height="14.5" rx="2.5"/>
<rect x="317.5" y="1368" width="15" height="11.5" rx="2"/>
<rect x="326" y="1352" width="6" height="6" fill="#999"/><rect x="338" y="1352" width="6" height="6" fill="#999"/><rect x="332" y="1358" width="6" height="6" fill="#999"/><rect x="338" y="1364" width="6" height="6" fill="#999"/><rect x="332" y="1370" width="6" height="0" fill="#999"/><rect x="338" y="1372" width="6" height="6" fill="#999"/>
<rect x="358.5" y="1342" width="63" height="48" rx="6" fill="#545454"/>
<path d="M365 1352 Q365 1348 369 1348 H392 Q396 1348 396 1352 V1375 Q396 1380 392 1380 H369 Q365 1380 365 1376 Z" fill="#6a6a6a"/>
<circle cx="381" cy="1365" r="8" fill="none" stroke="#545454" stroke-width="4"/>
<path d="M104.5 1422 L117 1434.5 H107 Q104.5 1434.5 104.5 1432 Z"/>
<circle cx="128.5" cy="1431.5" r="7.5" fill="#a9a9a9"/>
<path d="M158 1430 V1408 Q158 1406 160 1406 H169 L172 1409.5 H185 Q187.5 1409.5 187.5 1412 V1433 H160 Q158 1433 158 1430 Z"/>
<circle cx="184.5" cy="1431.5" r="7.5" fill="#a9a9a9"/>
<rect x="232" y="1409.5" width="8" height="8" fill="#9a9a9a"/>
<path d="M222 1430 L226.5 1426 V1434 Z"/>
<path d="M276 1426 V1434 H284 Z"/>
<rect x="327.8" y="1406" width="28.5" height="28" rx="5"/>
<circle cx="342" cy="1420" r="7.8" fill="#4e4e4e"/>
</g>
<g fill="none" stroke-linecap="round" stroke-linejoin="round"><path d="M384 1368 L396 1380 M396 1368 L384 1380" stroke="#545454" stroke-width="5"/><path d="M384 1368 L396 1380 M396 1368 L384 1380" stroke="#7a7a7a" stroke-width="2.4"/>
<path d="M398 1360 L406 1352 L414 1360 M398 1372 L406 1380 L414 1372" stroke="#7a7a7a" stroke-width="2"/></g>
<g stroke="#4e4e4e" stroke-width="1.8"><path d="M128.5 1427.5 V1435.5 M124.5 1431.5 H132.5 M184.5 1427.5 V1435.5 M180.5 1431.5 H188.5"/></g>

<!-- layer list -->
<rect x="138" y="1452" width="2" height="212" fill="#262626"/>
<rect x="184" y="1452" width="2" height="212" fill="#262626"/>
<rect x="186" y="1452" width="226" height="82" fill="#636a82"/>
<rect x="214" y="1534" width="198" height="2" fill="#262626"/>
<rect x="90" y="1616" width="322" height="2" fill="#262626"/>
<rect x="414" y="1502" width="8" height="67" rx="4" fill="#595959"/>
<!-- thumbs -->
<rect x="226.5" y="1456.5" width="59" height="75" fill="none" stroke="#e8e8e8" stroke-width="2.2"/>
<rect x="229.5" y="1459.5" width="53" height="69" fill="#4a4a4a" stroke="#222" stroke-width="3"/>
<rect x="236" y="1462" width="40" height="64" fill="url(#ck5)"/>
<rect x="230" y="1542" width="51" height="67" fill="#555" stroke="#222" stroke-width="2"/>
<rect x="236" y="1543" width="40" height="65" fill="url(#ck5)"/>

<path d="M252 1479 L258 1478" stroke="#777" stroke-width="1.2"/>
<!-- eyes -->
<g fill="#bababa">

<circle cx="112" cy="1492" r="6"/><path d="M99 1495 Q99.5 1485 112 1484 Q124.5 1485 125 1495" fill="none" stroke="#bababa" stroke-width="2.4" stroke-linecap="round"/>

<circle cx="112" cy="1574" r="6"/><path d="M99 1577 Q99.5 1567 112 1566 Q124.5 1567 125 1577" fill="none" stroke="#bababa" stroke-width="2.4" stroke-linecap="round"/>

<circle cx="112" cy="1648" r="6"/><path d="M99 1651 Q99.5 1641 112 1640 Q124.5 1641 125 1651" fill="none" stroke="#bababa" stroke-width="2.4" stroke-linecap="round"/>
<!-- pencil -->
<path d="M145.5 1503 L148 1496 L164 1480 Q166.5 1477.5 169 1480 Q171.5 1482.5 169 1485 L153 1501 Z"/>
<!-- folder -->
<path d="M242 1659 V1640 Q242 1637 245 1637 H253 L257 1641 H267 Q270 1641 270 1644 V1661 H245 Q242 1661 242 1659 Z"/>
</g>
<path d="M145 1506 H171" stroke="#bababa" stroke-width="2"/>
<rect x="153.5" y="1565.5" width="19" height="19" rx="3.5" fill="none" stroke="#262626" stroke-width="2"/>
<rect x="153.5" y="1639.5" width="19" height="19" rx="3.5" fill="none" stroke="#262626" stroke-width="2"/>
<path d="M208.5 1643.5 L216.5 1650.5 L208.5 1657.5" fill="none" stroke="#bababa" stroke-width="2" stroke-linecap="round"/>
<g stroke="#1e1e1e" stroke-width="2.2"><path d="M385.5 1486.5 H400 M385.5 1493 H400 M385.5 1499.5 H400"/></g>
<g stroke="#2a2a2a" stroke-width="2.2"><path d="M385.5 1568 H400 M385.5 1574.5 H400 M385.5 1581 H400 M385.5 1642 H400 M385.5 1648.5 H400 M385.5 1655 H400"/></g>
<rect x="88" y="1664" width="340" height="4" fill="#323232"/>
</svg>
<svg style="left:236px;top:1543px" width="40" height="65" viewBox="736 326 824 1319" preserveAspectRatio="none">
<!-- light sketch layer -->
<g opacity="0" fill="none" stroke="#dddddd" stroke-width="18.2" stroke-linecap="round">
<path d="M1030 600 Q1010 520 1040 470 Q1090 420 1180 425 Q1260 430 1290 480 Q1310 540 1290 600"/>
<path d="M1020 560 Q1015 500 1060 460 Q1120 425 1200 440 Q1275 460 1300 520"/>
<path d="M1040 640 Q1030 600 1045 570 M1270 640 Q1300 600 1310 560"/>
<path d="M1290 500 Q1330 470 1360 510 Q1370 550 1340 580"/>
<path d="M870 760 Q900 700 990 690 Q1060 680 1110 700 M850 790 Q880 730 960 710 Q1040 695 1130 715"/>
<path d="M850 830 Q830 880 880 900 Q960 920 1000 880 Q1030 830 1000 780"/>
<path d="M855 720 Q800 760 820 840 Q850 880 900 885"/>
<path d="M880 870 Q830 1000 790 1120 Q770 1200 790 1290"/>
<path d="M900 860 Q860 1000 840 1130 Q815 1250 830 1400"/>
<path d="M760 1180 Q790 1100 820 1000 Q840 920 870 880"/>
<path d="M770 1150 Q800 1250 840 1330 Q852 1360 855 1375"/>
<path d="M817 1160 Q825 1280 855 1400"/>
<path d="M940 1000 Q900 1100 880 1200 Q860 1300 856 1425"/>
<path d="M960 960 Q950 1100 960 1250"/>
<path d="M1000 1050 Q1000 1150 1010 1250"/>
<path d="M1060 1100 Q1080 1200 1090 1300 Q1090 1400 1095 1520"/>
<path d="M1040 1200 Q1080 1260 1105 1380"/>
<path d="M1125 1350 Q1140 1450 1160 1540 M1140 1320 Q1130 1450 1100 1540"/>
<path d="M1220 1200 Q1230 1300 1205 1480 Q1195 1540 1190 1580"/>

<path d="M1180 930 Q1230 1000 1300 1060 Q1380 1120 1420 1180"/>
<path d="M1300 760 Q1350 850 1380 960 Q1420 1080 1440 1200 Q1455 1300 1440 1390"/>
<path d="M1340 760 Q1420 850 1460 980 Q1500 1120 1490 1260 Q1470 1380 1430 1440"/>
<path d="M1230 700 Q1300 730 1340 800 Q1390 900 1400 1000"/>
<path d="M1250 650 Q1330 690 1400 770 Q1470 850 1480 940"/>

<path d="M1390 1200 Q1440 1320 1470 1440 Q1490 1500 1495 1520"/>
<path d="M1010 1130 Q1060 1120 1120 1110 Q1190 1100 1250 1120"/>
<path d="M900 1085 Q980 1040 1050 1030 Q1150 1020 1250 1060"/>
<path d="M960 780 Q1030 760 1100 770 Q1150 790 1200 830"/>
<path d="M1060 800 Q1090 860 1120 920 Q1150 960 1190 990"/>
<path d="M1130 780 Q1160 840 1170 900"/>
<path d="M1270 800 Q1250 900 1220 980"/>
<path d="M1310 560 Q1330 620 1320 700 Q1310 760 1300 800"/>
<path d="M1060 560 Q1050 620 1070 680"/>

<path d="M835 1375 Q850 1300 890 1240 Q940 1190 1000 1180"/>
</g>
<!-- main line art -->
<g fill="none" stroke="#909090" stroke-width="8.8" stroke-linecap="round" stroke-linejoin="round">
<!-- ears -->
<path d="M1014 380 Q1012 420 1014 452 Q1016 472 1024 484 L1028 480 L1030 494 L1036 500"/>
<path d="M1014 381 L1098 449"/>
<path d="M1225 337 L1154 432"/>
<path d="M1225 337 Q1229 370 1232 407 L1238 424 L1236 440 L1242 452 L1236 462 L1240 470 L1229 472"/>
<path d="M1222 354 Q1212 400 1201 452" stroke="#999" stroke-width="7.7"/>
<path d="M1018 392 Q1040 440 1060 468" stroke="#999" stroke-width="7.7"/>
<!-- head top & hair -->
<path d="M1085 439 Q1120 420 1164 418"/>
<path d="M1097 449 Q1060 470 1042 505 Q1026 540 1030 580 Q1034 612 1050 645"/>
<path d="M1082 472 Q1058 520 1058 575 Q1060 615 1078 650" stroke-width="8.4"/>
<path d="M1128 445 Q1115 470 1113 510 Q1112 550 1108 585" stroke-width="9.1"/>
<path d="M1140 443 Q1170 475 1184 530 Q1193 570 1196 612" stroke-width="11.2"/>
<path d="M1122 470 Q1130 520 1160 555 Q1175 570 1190 578" stroke-width="8.4"/>
<path d="M1155 440 Q1200 470 1218 535 Q1226 565 1228 600"/>
<path d="M1170 440 Q1235 465 1265 520 Q1282 560 1286 600" stroke-width="8.4"/>
<path d="M1238 470 Q1268 480 1282 515 Q1292 550 1287 592 Q1283 612 1275 632"/>
<path d="M1075 600 Q1085 620 1100 630 M1210 600 Q1205 625 1195 640" stroke-width="8.4"/>
<!-- bun -->
<path d="M1290 492 Q1318 478 1340 498 Q1354 518 1346 550 Q1338 570 1318 578"/>
<path d="M1288 480 Q1300 468 1315 472" stroke-width="7.7"/>
<!-- face -->
<path d="M1088 598 Q1100 628 1122 645 Q1140 660 1157 661 Q1185 652 1212 632"/>
<path d="M1075 578 Q1098 580 1112 583 Q1118 585 1121 592 Q1112 586 1100 586 Q1086 585 1077 582 Z" fill="#666" stroke="none"/><path d="M1072 574 L1082 580 M1090 578 L1100 580" stroke-width="7.0"/>
<path d="M1099 586 Q1104 597 1114 600 Q1119 597 1117 588" stroke-width="10.5"/><path d="M1096 601 Q1106 605 1116 602" stroke-width="7.7"/>
<path d="M1148 590 Q1160 576 1180 572 Q1198 568 1212 568 Q1205 574 1198 586 Q1190 578 1178 578 Q1162 580 1148 590 Z" fill="#666" stroke="none"/><path d="M1195 568 L1212 560 M1185 570 L1197 563" stroke-width="7.0"/>
<path d="M1168 579 Q1166 592 1180 593 Q1194 593 1194 580" stroke-width="12.6"/><path d="M1166 595 Q1182 597 1196 594" stroke-width="7.0"/>
<path d="M1128 630 Q1138 635 1145 634 M1150 634 Q1157 633 1162 629" stroke-width="12.6"/>
<path d="M1128 612 L1129 615" stroke-width="9.8"/>
<path d="M1146 664 Q1176 682 1207 665" stroke="#555" stroke-width="35.0"/>
<path d="M1144 660 V700 M1213 640 Q1212 670 1206 700" stroke-width="9.1"/>
<!-- collar / shoulders -->
<path d="M1030 676 L1110 656 M985 690 L1060 672 M1110 656 Q1120 660 1140 700"/>
<path d="M1026 682 Q990 680 940 686 Q900 700 873 740 Q846 770 842 786 Q846 815 865 826 Q900 830 953 813 Q970 806 982 799"/>
<path d="M880 810 Q910 800 940 806" stroke-width="7.7"/>
<path d="M962 702 Q950 740 962 780 M986 698 Q976 735 990 775 M1005 700 Q998 730 1010 760" stroke-width="8.4"/>
<path d="M1010 690 Q1050 700 1086 748 M1030 694 Q1068 712 1092 762 M1050 692 Q1080 720 1095 745" stroke-width="8.4"/>
<ellipse cx="1091" cy="770" rx="9" ry="22" transform="rotate(-15 1091 770)"/>
<ellipse cx="1103" cy="815" rx="10" ry="25" transform="rotate(-12 1103 815)"/>
<path d="M1110 745 L1130 735 L1145 755 L1128 775 Z M1120 730 L1135 725 M1130 770 L1148 800" stroke-width="9.1"/>
<path d="M1060 780 L1080 840 L1110 850 L1150 830 L1140 780" stroke-width="7.7"/>
<!-- hair strands left of body -->
<path d="M1007 745 Q988 772 986 800 Q996 830 1000 852 Q996 876 984 889"/>
<path d="M1022 740 Q1005 780 1016 822 Q1022 850 1010 870" stroke-width="8.4"/>
<path d="M1034 764 Q1030 820 1029 880"/>
<path d="M1058 820 Q1062 860 1068 900 M1075 830 Q1082 870 1085 905" stroke-width="7.7"/>
<!-- cape left -->
<path d="M888 832 Q850 960 829 1080 Q825 1220 870 1346"/>
<path d="M912 829 Q892 960 880 1080 L870 1348"/>
<path d="M966 889 L974 1080 L982 1220"/>
<path d="M872 1221 Q920 1180 974 1173 Q1000 1175 1001 1188 Q998 1210 982 1220 Q1010 1216 1049 1203" stroke-width="9.1"/>
<!-- belts -->
<path d="M1034 905 Q1100 936 1200 937"/>
<path d="M1029 970 Q1100 986 1200 978 L1216 970 L1229 980"/>
<path d="M1029 937 C1060 990 1140 1025 1176 1021 C1200 1018 1215 1010 1226 1000"/>
<path d="M1040 990 C1080 1040 1140 1070 1176 1067 C1205 1062 1225 1045 1239 1026"/>
<path d="M1037 1002 L1060 971 L1093 986 L1097 1027 L1058 1024 Z"/>
<path d="M1172 1018 Q1170 1040 1174 1065 M1186 1016 Q1185 1040 1189 1066"/>
<!-- legs -->
<path d="M1029 1027 Q1015 1050 1019 1080 Q1050 1200 1090 1337 Q1080 1420 1079 1516"/>
<path d="M1125 1113 Q1110 1220 1090 1337"/>
<path d="M1229 982 Q1262 1020 1270 1070 Q1272 1110 1262 1145 Q1240 1220 1209 1281 Q1196 1310 1193 1324 Q1170 1450 1142 1583"/>
<path d="M1194 1333 Q1215 1420 1213 1540"/>

<!-- coat right -->
<path d="M1220 650 L1326 740 L1242 761 L1237 802 L1305 802 L1291 948"/>
<path d="M1229 660 L1312 735" stroke-width="7.7"/>
<path d="M1201 718 Q1250 900 1351 1100"/>
<path d="M1307 758 Q1400 930 1473 1100"/>
<path d="M1336 1080 Q1390 1300 1412 1411"/>
<path d="M1462 1080 Q1485 1130 1481 1177 Q1480 1300 1412 1411"/>
<path d="M1321 1177 Q1360 1195 1384 1218"/>
<path d="M1283 808 L1287 817 L1296 820 L1287 823 L1283 832 L1279 823 L1270 820 L1279 817 Z" stroke-width="7.7"/>
<path d="M1283 832 Q1275 880 1270 890 Q1262 895 1255 870" stroke-width="7.7"/>
<!-- hand right -->
<path d="M1275 1064 Q1300 1070 1325 1060 M1276 1075 Q1300 1078 1324 1070 M1266 1076 Q1262 1110 1268 1130 Q1290 1150 1310 1148 Q1335 1140 1350 1100 M1320 1075 Q1345 1090 1352 1100 M1276 1150 Q1274 1190 1278 1196 Q1282 1197 1284 1185 L1286 1160 M1296 1160 Q1293 1200 1300 1228 Q1304 1232 1306 1225 Q1310 1190 1318 1170 M1232 987 L1270 995 L1280 1033 M1240 970 L1262 990"/>

<!-- hair right -->
<path d="M1326 650 Q1410 720 1440 772 Q1452 825 1402 862 Q1380 872 1340 872"/>
<path d="M1395 740 Q1428 800 1410 850 Q1395 870 1370 880" stroke-width="8.4"/>
<path d="M1380 750 Q1400 820 1385 860" stroke-width="7.7"/>
<path d="M1398 870 Q1440 900 1452 960 Q1448 1000 1438 1020 Q1452 1042 1476 1002"/>
<path d="M1355 900 Q1418 958 1420 1040 Q1430 1062 1462 1052" stroke-width="8.4"/>
<path d="M1400 880 Q1440 870 1468 866" stroke-width="8.4"/>
<path d="M1290 650 Q1320 720 1330 780" stroke-width="7.7"/>
<path d="M1190 700 Q1175 760 1185 820 Q1190 850 1170 880" stroke-width="8.4"/>
<path d="M1170 860 Q1150 880 1162 920 Q1170 945 1158 960" stroke-width="7.7"/>
<path d="M1260 740 Q1280 800 1270 860" stroke-width="7.7"/>
</g>
<g opacity="0" fill="none" stroke="#dddddd" stroke-width="16.8" stroke-linecap="round">
<path d="M866 686 Q780 720 786 800 Q800 880 880 895 Q960 900 985 830 Q1000 760 930 700"/>
<path d="M870 760 Q960 690 1080 665 Q1180 650 1260 680"/>
<path d="M840 840 Q880 770 990 730 Q1090 700 1180 720"/>
<path d="M1110 700 Q1130 760 1150 830 Q1170 900 1200 960"/>
<path d="M1280 500 Q1300 560 1300 640 M1250 540 Q1270 600 1262 680"/>
<path d="M1290 760 Q1320 820 1360 900 Q1400 980 1420 1060"/>

<path d="M1340 950 Q1380 1000 1430 1020 M1250 880 Q1330 940 1400 940"/>
<path d="M1010 900 Q1060 960 1120 980 Q1180 1000 1260 990"/>
<path d="M1050 1060 Q1100 1080 1180 1080 Q1240 1080 1300 1060"/>
<path d="M960 830 Q940 900 950 980 Q955 1040 965 1100"/>
<path d="M1050 480 Q1040 530 1048 580 M1070 460 Q1060 520 1070 580"/>
<path d="M1230 470 Q1260 520 1268 580 Q1270 620 1255 660"/>
<path d="M1095 570 Q1130 560 1200 562 Q1240 566 1260 580"/>
</g>
<g fill="none" stroke="#909090" stroke-width="8.0" stroke-linecap="round" stroke-linejoin="round">
<path d="M1242 440 Q1270 460 1280 488 Q1290 520 1286 540 Q1282 570 1276 580 Q1262 610 1238 623 Q1210 635 1180 633"/>
<path d="M1288 590 Q1300 620 1315 643 Q1340 670 1373 681 Q1410 700 1435 760"/>
<path d="M1267 594 Q1285 625 1300 652 Q1322 700 1340 760"/>
<path d="M1280 600 Q1300 660 1323 710" stroke-width="7.0"/>
<path d="M1238 598 Q1225 650 1215 691 Q1205 730 1199 760"/>
<path d="M1180 484 Q1195 520 1195 556 Q1192 590 1180 614"/>
<path d="M1236 548 Q1232 580 1222 600 Q1210 620 1200 625" stroke-width="7.7"/>
<path d="M1288 540 Q1300 555 1302 575 M1300 510 Q1312 520 1312 540" stroke-width="7.0"/>
<!-- sleeve top / collar -->
<path d="M975 691 L994 680 L1023 686 L1061 675"/>
<path d="M1028 674 L1124 650 M1030 676 Q1090 690 1142 708"/>
<path d="M876 807 Q900 800 942 817" stroke-width="7.7"/>
<path d="M990 696 Q960 730 982 773 M1001 696 Q1004 720 1004 745 Q990 770 978 792 M1018 689 Q1012 720 1022 745" stroke-width="7.7"/>
<path d="M1038 708 L1090 768 M1053 710 L1094 760 M1023 724 L1083 765 M1060 698 Q1080 710 1100 745" stroke-width="7.7"/>
<ellipse cx="1087" cy="763" rx="12" ry="24" transform="rotate(-18 1087 763)" stroke-width="11.2"/>
<ellipse cx="1098" cy="818" rx="14" ry="27" transform="rotate(-14 1098 818)" stroke-width="11.2"/>
<path d="M1108 753 L1125 745 L1135 765 L1118 775 Z M1130 740 L1145 730 L1150 748 Z M1138 770 L1152 765 L1155 780 Z M1140 780 Q1155 810 1165 830" stroke-width="8.4"/>
<path d="M1036 741 Q1030 830 1029 920 M1048 790 Q1060 850 1072 920 M1060 790 Q1075 860 1090 920 M1095 845 Q1105 880 1112 920" stroke-width="7.7"/>
<circle cx="1082.5" cy="878" r="2" stroke-width="7.7"/><circle cx="1086.7" cy="911.8" r="2" stroke-width="7.7"/>
<path d="M1019 734 Q995 770 982 799 Q978 815 980 826 Q992 845 999 859 Q1002 868 997 873 Q990 882 984 888"/>
<path d="M1028 744 Q1015 790 997 826 Q1005 838 1021 841" stroke-width="7.7"/>
<path d="M1040 760 Q1032 800 1040 820" stroke-width="7.0"/>
<!-- right hair lower waves -->
<path d="M1340 820 Q1365 870 1368 930 Q1372 980 1360 1000" stroke-width="7.7"/>
<path d="M1430 880 Q1475 890 1468 866 M1420 920 Q1450 960 1440 1000 Q1436 1030 1460 1045 Q1478 1040 1476 1002" stroke-width="7.7"/>
<path d="M1248 745 Q1262 700 1290 690" stroke-width="7.0"/>
</g>
</svg>
<div class="t" style="left:181px;top:1305px;font-size:21px;transform:scaleX(0.96);transform-origin:0 0;color:#d8d8d8">표준</div>
<div class="t" style="left:361.5px;top:1300.5px;font-size:23.5px;transform:scaleX(0.935);transform-origin:0 0;color:#d8d8d8">100</div>
<div class="t" style="left:297.5px;top:1465px;font-size:23px;transform:scaleX(0.945);transform-origin:0 0;color:#d8d8d8">100 %</div>
<div class="t" style="left:297px;top:1502px;font-size:21px;transform:scaleX(0.85);transform-origin:0 0;color:#d8d8d8">레이어 7</div>
<div class="t" style="left:297.5px;top:1547.5px;font-size:23px;transform:scaleX(0.945);transform-origin:0 0;color:#d8d8d8">100 %</div>
<div class="t" style="left:297px;top:1584px;font-size:21px;transform:scaleX(0.85);transform-origin:0 0;color:#d8d8d8">레이어 5</div>
<div class="a" style="left:290px;top:1620px;width:100px;height:44px;overflow:hidden">
<div class="t" style="left:4.5px;top:5px;font-size:23px;transform:scaleX(0.945);transform-origin:0 0;color:#d8d8d8">15 % <span style="font-size:17px">표</span></div>
<div class="t" style="left:4px;top:35px;font-size:21px;color:#d8d8d8">폴더 1</div>
</div>

<!--PANELS-->
</body></html>
